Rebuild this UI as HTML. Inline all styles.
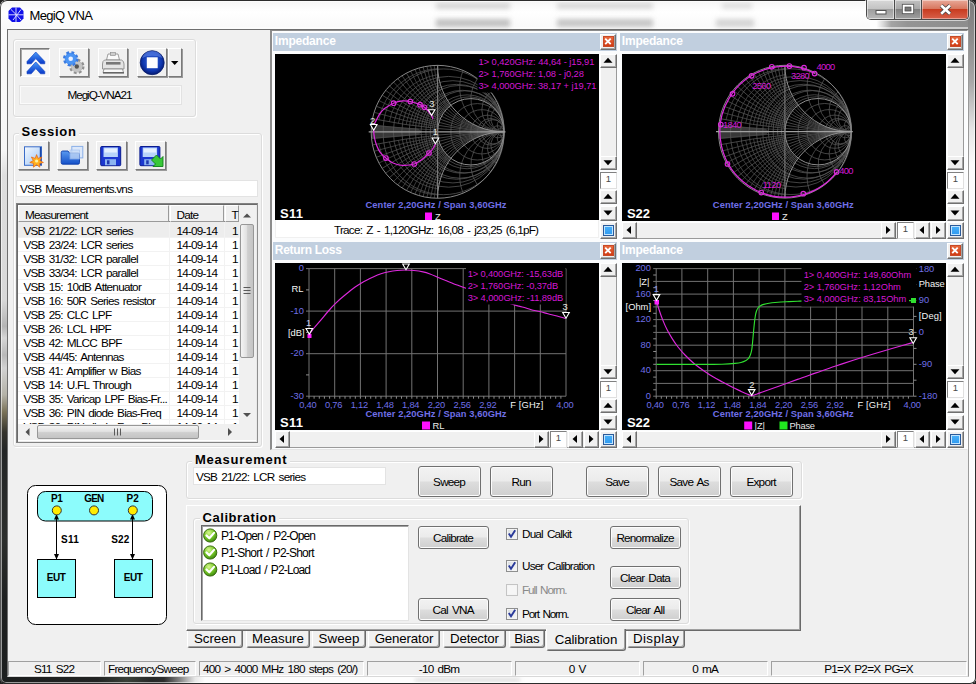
<!DOCTYPE html><html><head><meta charset="utf-8"><title>MegiQ VNA</title><style>
html,body{margin:0;padding:0}
body{width:976px;height:684px;overflow:hidden;position:relative;background:#202020;font-family:"Liberation Sans",sans-serif;color:#000}
.a{position:absolute;box-sizing:border-box}
.t{position:absolute;white-space:pre}
.btn3{position:absolute;box-sizing:border-box;background:#f0f0f0;border:1px solid;border-color:#fff #7a7a7a #7a7a7a #fff;box-shadow:1px 1px 0 #9a9a9a}
.sb{position:absolute;box-sizing:border-box;background:#f0f0f0;border:1px solid;border-color:#fff #707070 #707070 #fff;box-shadow:inset -1px -1px 0 #a6a6a6}
.w7{position:absolute;box-sizing:border-box;border:1px solid #707070;border-radius:3px;background:linear-gradient(#f2f2f2 0%,#ebebeb 48%,#dddddd 52%,#cfcfcf 100%);box-shadow:inset 0 0 0 1px #fcfcfc}
.gb{position:absolute;box-sizing:border-box;border:1px solid #dcdcdc;border-radius:3px;box-shadow:inset 1px 1px 0 #fff,1px 1px 0 #fff}
svg{position:absolute;left:0;top:0;overflow:visible}
</style></head><body>
<div class="a" style="left:0;top:0;width:976px;height:684px;border-radius:7px 7px 6px 6px;background:#fff;overflow:hidden">
<div class="a" style="left:0;top:0;width:976px;height:30px;background:linear-gradient(90deg,#fafafa 0%,#ffffff 30%,#fefefe 89.800%,#d8d8d8 90.500%,#a4a4a4 91.300%,#949494 93%,#8c8c8c 100%)"></div>
<div class="a" style="left:0;top:0;width:870px;height:30px;background:linear-gradient(#f4f4f4,#ffffff 40%,#f8f8f8)"></div>
<div class="a" style="left:8px;top:27px;width:961px;height:2px;background:rgba(255,255,255,.55)"></div>
<div class="a" style="left:436px;top:3px;width:74px;height:6px;background:rgba(60,60,60,0.2);filter:blur(2.5px)"></div>
<div class="a" style="left:436px;top:19px;width:74px;height:8px;background:rgba(60,60,60,0.3);filter:blur(2.5px)"></div>
<div class="a" style="left:557px;top:3px;width:96px;height:6px;background:rgba(60,60,60,0.18);filter:blur(2.5px)"></div>
<div class="a" style="left:557px;top:19px;width:96px;height:8px;background:rgba(60,60,60,0.28);filter:blur(2.5px)"></div>
<div class="a" style="left:722px;top:3px;width:30px;height:6px;background:rgba(60,60,60,0.14);filter:blur(2.5px)"></div>
<div class="a" style="left:716px;top:19px;width:38px;height:8px;background:rgba(60,60,60,0.2);filter:blur(2.5px)"></div>
<div class="a" style="left:0;top:30px;width:8px;height:654px;background:linear-gradient(#fbfbfb 0.0%,#f6f6f6 18.3%,#dedede 22.2%,#d8d8d8 41.3%,#b4b4b4 45.3%,#d6d6d6 47.1%,#b8b8b8 49.7%,#d2d2d2 51.7%,#b4b2a8 55.8%,#7a7258 58.4%,#34332c 61.5%,#242626 64.2%,#2c2e2c 78.0%,#1e2020 87.2%,#1c1e1e 100.0%)"></div>
<div class="a" style="left:968px;top:0;width:8px;height:684px;background:linear-gradient(#7c7c7c 0%,#8e8e8e 6%,#a8a8a8 12%,#e6e6e6 19%,#fbfbfb 24%,#fdfdfd 100%)"></div>
<div class="a" style="left:0;top:676px;width:976px;height:8px;background:linear-gradient(90deg,#1c1e1e 0%,#222424 10%,#3a4038 13%,#262828 15.500%,#2c2c2c 16.800%,#8a8a8a 18.500%,#e8e8e8 20%,#fdfdfd 21%,#fdfdfd 100%)"></div>
<div class="a" style="left:415px;top:678px;width:105px;height:4px;background:rgba(60,60,60,.16);filter:blur(2px)"></div>
</div>
<div class="a" style="left:0;top:0;width:976px;height:684px;border:1px solid #2b2b2b;border-radius:7px 7px 6px 6px;border-left-color:#555;box-shadow:inset 0 0 0 1px rgba(255,255,255,.55)"></div>
<div class="a" style="left:7px;top:29px;width:962px;height:648px;border:1px solid #6e6e6e;border-right-color:#9a9a9a;border-bottom-color:#d8d8d8;background:#f0f0f0"></div>
<svg width="976" height="30"><g><polygon points="12,7.5 20,7.5 23.5,11 23.5,18.5 20,22 12,22 8.5,18.5 8.5,11" fill="#1010e8"/><path d="M8.5 14.8H23.5M16 7.5V22M11 9.5Q16 14 21 20M13 20Q17 15 21 9.5" stroke="#e8e8ff" stroke-width="0.9" fill="none"/></g></svg>
<div class="t" style="left:29.50px;top:8px;font-size:13px;line-height:15px;letter-spacing:-0.64px;">MegiQ VNA</div>
<div class="a" style="left:866px;top:0;width:103px;height:20px;border:1px solid #4a4a4a;border-top:none;border-radius:0 0 5px 5px;overflow:hidden;box-shadow:0 0 0 1px rgba(255,255,255,.6)"><div class="a" style="left:0;top:0;width:28px;height:19px;background:linear-gradient(#d8d8d8 0%,#c4c4c4 45%,#9e9e9e 50%,#b8b8b8 100%);border-right:1px solid #4a4a4a;box-shadow:inset 0 0 0 1px rgba(255,255,255,.5)"></div><div class="a" style="left:28px;top:0;width:27px;height:19px;background:linear-gradient(#c0c0c0 0%,#a8a8a8 45%,#808080 50%,#a0a0a0 100%);border-right:1px solid #4a4a4a;box-shadow:inset 0 0 0 1px rgba(255,255,255,.45)"></div><div class="a" style="left:55px;top:0;width:46px;height:19px;background:linear-gradient(#e8a898 0%,#d87860 45%,#c83c20 50%,#d8604a 100%);box-shadow:inset 0 0 0 1px rgba(255,255,255,.4)"></div></div>
<svg width="976" height="30"><rect x="876" y="10.5" width="10" height="3.5" fill="#fff" stroke="#555" stroke-width="1"/><rect x="903.5" y="5.5" width="9" height="7" fill="none" stroke="#fff" stroke-width="2.2"/><rect x="902.3" y="4.3" width="11.4" height="9.4" fill="none" stroke="#555" stroke-width="0.8"/><rect x="905.2" y="7.2" width="5.6" height="3.6" fill="#777" stroke="#555" stroke-width="0.8"/><path d="M941.2 5.5L950 13.8M950 5.5L941.2 13.8" stroke="#444" stroke-width="4.2"/><path d="M941.2 5.5L950 13.8M950 5.5L941.2 13.8" stroke="#fff" stroke-width="2.6"/></svg>
<div class="gb" style="left:13px;top:39px;width:183px;height:78px"></div>
<div class="a" style="left:20px;top:48px;width:30px;height:29px;background:#f8f8f8;border:1px solid;border-color:#7a7a7a #fff #fff #7a7a7a;box-shadow:inset 1px 1px 0 #a8a8a8"></div>
<div class="btn3" style="left:59px;top:48px;width:30px;height:29px"></div>
<div class="btn3" style="left:98px;top:48px;width:30px;height:29px"></div>
<div class="btn3" style="left:137px;top:48px;width:30px;height:29px"></div>
<div class="btn3" style="left:168px;top:48px;width:14px;height:29px"></div>
<svg width="976" height="120">
<defs><linearGradient id="bl" x1="0" y1="0" x2="0" y2="1"><stop offset="0" stop-color="#4a9af8"/><stop offset="1" stop-color="#0838c8"/></linearGradient>
<radialGradient id="stp" cx=".5" cy=".45" r=".55"><stop offset="0" stop-color="#3a6ae0"/><stop offset=".7" stop-color="#1038b0"/><stop offset="1" stop-color="#061a70"/></radialGradient>
<linearGradient id="pg" x1="0" y1="0" x2="1" y2="1"><stop offset="0" stop-color="#f4f9ff"/><stop offset="1" stop-color="#9cc4f4"/></linearGradient>
<linearGradient id="fo" x1="0" y1="0" x2="0" y2="1"><stop offset="0" stop-color="#5a9af0"/><stop offset="1" stop-color="#1450c8"/></linearGradient></defs>
<path d="M27 61.5L35.8 52L44.8 61.5L44.8 63.8L40.5 63.8L35.8 58.6L31.2 63.8L27 63.8Z" fill="url(#bl)" stroke="#0a3cc0" stroke-width=".6"/>
<path d="M27 71.5L35.8 62L44.8 71.5L44.8 73.8L40.5 73.8L35.8 68.6L31.2 73.8L27 73.8Z" fill="url(#bl)" stroke="#0a3cc0" stroke-width=".6"/>
<g><circle cx="76.8" cy="66.5" r="6" fill="#b8b8b8" stroke="#909090" stroke-width="3.4" stroke-dasharray="2.6 2.1"/><circle cx="76.8" cy="66.5" r="5.6" fill="#c4c4c4"/><circle cx="76.8" cy="66.5" r="2.2" fill="#555"/>
<circle cx="70.7" cy="58.8" r="6" fill="#4a90f0" stroke="#3a7ae0" stroke-width="3.4" stroke-dasharray="2.6 2.1"/><circle cx="70.7" cy="58.8" r="5.6" fill="#4a94f4"/><circle cx="70.7" cy="58.8" r="2.3" fill="#e8f0ff"/></g>
<g><path d="M108 54H118L119.5 60H106.5Z" fill="#fafafa" stroke="#888" stroke-width=".8"/><rect x="110.5" y="52.5" width="5" height="3" fill="#ccc" stroke="#888" stroke-width=".6"/>
<path d="M104.5 60H121.5Q124 61 124 64V69H102.5V64Q102.500 61 104.5 60Z" fill="#e4e4e4" stroke="#808080" stroke-width=".8"/><rect x="106" y="62" width="14.5" height="2.6" fill="#777"/>
<path d="M104 69H122.5L123.500 72.500H103Z" fill="#f8f8f8" stroke="#808080" stroke-width=".8"/><rect x="103" y="72" width="21" height="1.6" fill="#666"/></g>
<circle cx="152.2" cy="62.7" r="12" fill="url(#stp)" stroke="#081c6c" stroke-width=".8"/><path d="M142 58A11 11 0 0 1 162.400 58A16 10 0 0 0 142 58Z" fill="#6a90f0" opacity=".55"/><rect x="146.800" y="57.300" width="10.900" height="10.900" fill="#fff"/>
<path d="M171 61H178.400L174.700 65Z" fill="#000"/>
</svg>
<div class="a" style="left:20px;top:86px;width:161px;height:18px;border:1px solid #fafafa;box-shadow:0 0 0 1px #e2e2e2;background:#f0f0f0"></div>
<div class="t" style="left:67.47px;top:88px;font-size:11.75px;line-height:13px;letter-spacing:-1.07px;">MegiQ-VNA21</div>
<div class="gb" style="left:13px;top:133px;width:249px;height:314px"></div>
<div class="a" style="left:19px;top:124px;width:60px;height:14px;background:#f0f0f0"></div>
<div class="t" style="left:21.50px;top:124px;font-size:13px;line-height:15px;letter-spacing:0.77px;font-weight:bold;">Session</div>
<div class="btn3" style="left:18px;top:141px;width:31px;height:29px"></div>
<div class="btn3" style="left:57px;top:141px;width:31px;height:29px"></div>
<div class="btn3" style="left:96px;top:141px;width:31px;height:29px"></div>
<div class="btn3" style="left:135px;top:141px;width:31px;height:29px"></div>
<svg width="976" height="180">
<rect x="24.5" y="146.800" width="17" height="18.500" fill="url(#pg)" stroke="#3a6cc8" stroke-width="1"/><path d="M40.500 147V165" stroke="#1a48a8" stroke-width="1.400"/>
<path d="M36.600 154.600L38 158.400L41.800 157L39.900 160.600L43.400 162.500L39.600 163.400L39.800 167.200L36.600 164.800L33.400 167.200L33.600 163.400L29.800 162.500L33.300 160.600L31.400 157L35.200 158.400Z" fill="#ffb020" stroke="#e86010" stroke-width=".7"/><circle cx="36.600" cy="161" r="1.600" fill="#fff2a0"/>
<rect x="71.800" y="146.400" width="11" height="11.500" fill="#dce8fa" stroke="#8ab0e8" stroke-width="1"/>
<path d="M61.200 152.500Q61.200 151 62.700 151H68L69.500 153H78Q79.500 153 79.500 154.500V162.700Q79.500 164.200 78 164.200H62.700Q61.200 164.200 61.200 162.700Z" fill="url(#fo)" stroke="#0c3ca8" stroke-width=".9"/>
<rect x="70" y="150" width="9.500" height="9" fill="#c8dcf8" opacity=".75" stroke="#9cbcf0" stroke-width=".8"/>
<g id="flp"><rect x="100.700" y="146.500" width="20" height="19.200" rx="1" fill="#1c38d0" stroke="#0a1c90" stroke-width="1"/><rect x="103.500" y="147.500" width="14.400" height="9.500" fill="#b8d4fa"/><rect x="104.500" y="148.500" width="12.400" height="4" fill="#e4f0ff"/><rect x="105" y="159.200" width="11" height="6" fill="#8cb4f0"/><rect x="107" y="160.300" width="2.500" height="4" fill="#2038b0"/></g>
<g transform="translate(39.200 0)"><rect x="100.700" y="146.500" width="20" height="19.200" rx="1" fill="#1c38d0" stroke="#0a1c90" stroke-width="1"/><rect x="103.500" y="147.500" width="14.400" height="9.500" fill="#b8d4fa"/><rect x="104.500" y="148.500" width="12.400" height="4" fill="#e4f0ff"/><rect x="105" y="159.200" width="11" height="6" fill="#8cb4f0"/><rect x="107" y="160.300" width="2.500" height="4" fill="#2038b0"/></g>
<path d="M156.500 155L160.500 159L163 156.500L163 166.500L153 166.500L155.500 164L151.500 160Z" fill="#38c838" stroke="#108018" stroke-width=".9"/>
</svg>
<div class="a" style="left:16px;top:180px;width:242px;height:17px;background:#fff;border:1px solid #e3e3e3"></div>
<div class="t" style="left:20.00px;top:182px;font-size:11.75px;line-height:13px;letter-spacing:-0.77px;word-spacing:1.6px;">VSB Measurements.vns</div>
<div class="a" style="left:16px;top:203px;width:242px;height:240px;background:#fff;border:1px solid #828282;border-right-color:#8e8e8e;box-shadow:inset 1px 1px 0 #696969,inset -1px -1px 0 #e8e8e8"></div>
<div class="a" style="left:18px;top:205px;width:221px;height:17px;background:#f0f0f0;border-bottom:1px solid #8a8a8a"></div>
<div class="a" style="left:18px;top:205px;width:151px;height:17px;border:1px solid;border-color:#fff #9a9a9a #9a9a9a #fff;background:#f0f0f0"></div>
<div class="a" style="left:170px;top:205px;width:54px;height:17px;border:1px solid;border-color:#fff #9a9a9a #9a9a9a #fff;background:#f0f0f0"></div>
<div class="a" style="left:225px;top:205px;width:14px;height:17px;border:1px solid;border-color:#fff #9a9a9a #9a9a9a #fff;background:#f0f0f0"></div>
<div class="t" style="left:25.00px;top:208px;font-size:11.75px;line-height:13px;letter-spacing:-0.83px;">Measurement</div>
<div class="t" style="left:176.50px;top:208px;font-size:11.75px;line-height:13px;letter-spacing:-0.78px;">Date</div>
<div class="t" style="left:231.50px;top:208px;font-size:11.75px;line-height:13px;">T</div>
<div class="a" style="left:18px;top:222px;width:221px;height:202px;overflow:hidden;background:#fff">
<div class="a" style="left:0;top:0;width:221px;height:15px;background:#ededed"></div>
<div class="a" style="left:151px;top:0;width:1px;height:202px;background:#f2f2f2"></div><div class="a" style="left:206px;top:0;width:1px;height:202px;background:#f2f2f2"></div>
<div class="a" style="left:0;top:15px;width:221px;height:1px;background:#f2f2f2"></div>
<div class="a" style="left:0;top:29px;width:221px;height:1px;background:#f2f2f2"></div>
<div class="a" style="left:0;top:43px;width:221px;height:1px;background:#f2f2f2"></div>
<div class="a" style="left:0;top:57px;width:221px;height:1px;background:#f2f2f2"></div>
<div class="a" style="left:0;top:71px;width:221px;height:1px;background:#f2f2f2"></div>
<div class="a" style="left:0;top:85px;width:221px;height:1px;background:#f2f2f2"></div>
<div class="a" style="left:0;top:99px;width:221px;height:1px;background:#f2f2f2"></div>
<div class="a" style="left:0;top:113px;width:221px;height:1px;background:#f2f2f2"></div>
<div class="a" style="left:0;top:127px;width:221px;height:1px;background:#f2f2f2"></div>
<div class="a" style="left:0;top:141px;width:221px;height:1px;background:#f2f2f2"></div>
<div class="a" style="left:0;top:155px;width:221px;height:1px;background:#f2f2f2"></div>
<div class="a" style="left:0;top:169px;width:221px;height:1px;background:#f2f2f2"></div>
<div class="a" style="left:0;top:183px;width:221px;height:1px;background:#f2f2f2"></div>
<div class="a" style="left:0;top:197px;width:221px;height:1px;background:#f2f2f2"></div>
<div class="a" style="left:0;top:211px;width:221px;height:1px;background:#f2f2f2"></div>
</div>
<div class="a" style="left:18px;top:222px;width:221px;height:202px;overflow:hidden">
<div class="t" style="left:5.50px;top:1.5px;font-size:11.75px;line-height:13px;letter-spacing:-0.78px;word-spacing:1.6px;">VSB 21/22: LCR series</div>
<div class="t" style="left:158.50px;top:1.5px;font-size:11.75px;line-height:13px;letter-spacing:-0.79px;">14-09-14</div>
<div class="t" style="left:214.00px;top:1.5px;font-size:11.75px;line-height:13px;">1</div>
<div class="t" style="left:5.50px;top:15.5px;font-size:11.75px;line-height:13px;letter-spacing:-0.78px;word-spacing:1.6px;">VSB 23/24: LCR series</div>
<div class="t" style="left:158.50px;top:15.5px;font-size:11.75px;line-height:13px;letter-spacing:-0.79px;">14-09-14</div>
<div class="t" style="left:214.00px;top:15.5px;font-size:11.75px;line-height:13px;">1</div>
<div class="t" style="left:5.50px;top:29.5px;font-size:11.75px;line-height:13px;letter-spacing:-0.78px;word-spacing:1.6px;">VSB 31/32: LCR parallel</div>
<div class="t" style="left:158.50px;top:29.5px;font-size:11.75px;line-height:13px;letter-spacing:-0.79px;">14-09-14</div>
<div class="t" style="left:214.00px;top:29.5px;font-size:11.75px;line-height:13px;">1</div>
<div class="t" style="left:5.50px;top:43.5px;font-size:11.75px;line-height:13px;letter-spacing:-0.78px;word-spacing:1.6px;">VSB 33/34: LCR parallel</div>
<div class="t" style="left:158.50px;top:43.5px;font-size:11.75px;line-height:13px;letter-spacing:-0.79px;">14-09-14</div>
<div class="t" style="left:214.00px;top:43.5px;font-size:11.75px;line-height:13px;">1</div>
<div class="t" style="left:5.50px;top:57.5px;font-size:11.75px;line-height:13px;letter-spacing:-0.78px;word-spacing:1.6px;">VSB 15: 10dB Attenuator</div>
<div class="t" style="left:158.50px;top:57.5px;font-size:11.75px;line-height:13px;letter-spacing:-0.79px;">14-09-14</div>
<div class="t" style="left:214.00px;top:57.5px;font-size:11.75px;line-height:13px;">1</div>
<div class="t" style="left:5.50px;top:71.5px;font-size:11.75px;line-height:13px;letter-spacing:-0.78px;word-spacing:1.6px;">VSB 16: 50R Series resistor</div>
<div class="t" style="left:158.50px;top:71.5px;font-size:11.75px;line-height:13px;letter-spacing:-0.79px;">14-09-14</div>
<div class="t" style="left:214.00px;top:71.5px;font-size:11.75px;line-height:13px;">1</div>
<div class="t" style="left:5.50px;top:85.5px;font-size:11.75px;line-height:13px;letter-spacing:-0.78px;word-spacing:1.6px;">VSB 25: CLC LPF</div>
<div class="t" style="left:158.50px;top:85.5px;font-size:11.75px;line-height:13px;letter-spacing:-0.79px;">14-09-14</div>
<div class="t" style="left:214.00px;top:85.5px;font-size:11.75px;line-height:13px;">1</div>
<div class="t" style="left:5.50px;top:99.5px;font-size:11.75px;line-height:13px;letter-spacing:-0.78px;word-spacing:1.6px;">VSB 26: LCL HPF</div>
<div class="t" style="left:158.50px;top:99.5px;font-size:11.75px;line-height:13px;letter-spacing:-0.79px;">14-09-14</div>
<div class="t" style="left:214.00px;top:99.5px;font-size:11.75px;line-height:13px;">1</div>
<div class="t" style="left:5.50px;top:113.5px;font-size:11.75px;line-height:13px;letter-spacing:-0.78px;word-spacing:1.6px;">VSB 42: MLCC BPF</div>
<div class="t" style="left:158.50px;top:113.5px;font-size:11.75px;line-height:13px;letter-spacing:-0.79px;">14-09-14</div>
<div class="t" style="left:214.00px;top:113.5px;font-size:11.75px;line-height:13px;">1</div>
<div class="t" style="left:5.50px;top:127.5px;font-size:11.75px;line-height:13px;letter-spacing:-0.78px;word-spacing:1.6px;">VSB 44/45: Antennas</div>
<div class="t" style="left:158.50px;top:127.5px;font-size:11.75px;line-height:13px;letter-spacing:-0.79px;">14-09-14</div>
<div class="t" style="left:214.00px;top:127.5px;font-size:11.75px;line-height:13px;">1</div>
<div class="t" style="left:5.50px;top:141.5px;font-size:11.75px;line-height:13px;letter-spacing:-0.78px;word-spacing:1.6px;">VSB 41: Amplifier w Bias</div>
<div class="t" style="left:158.50px;top:141.5px;font-size:11.75px;line-height:13px;letter-spacing:-0.79px;">14-09-14</div>
<div class="t" style="left:214.00px;top:141.5px;font-size:11.75px;line-height:13px;">1</div>
<div class="t" style="left:5.50px;top:155.5px;font-size:11.75px;line-height:13px;letter-spacing:-0.78px;word-spacing:1.6px;">VSB 14: U.FL Through</div>
<div class="t" style="left:158.50px;top:155.5px;font-size:11.75px;line-height:13px;letter-spacing:-0.79px;">14-09-14</div>
<div class="t" style="left:214.00px;top:155.5px;font-size:11.75px;line-height:13px;">1</div>
<div class="t" style="left:5.50px;top:169.5px;font-size:11.75px;line-height:13px;letter-spacing:-0.78px;word-spacing:1.6px;">VSB 35: Varicap LPF Bias-Fr...</div>
<div class="t" style="left:158.50px;top:169.5px;font-size:11.75px;line-height:13px;letter-spacing:-0.79px;">14-09-14</div>
<div class="t" style="left:214.00px;top:169.5px;font-size:11.75px;line-height:13px;">1</div>
<div class="t" style="left:5.50px;top:183.5px;font-size:11.75px;line-height:13px;letter-spacing:-0.78px;word-spacing:1.6px;">VSB 36: PIN diode Bias-Freq</div>
<div class="t" style="left:158.50px;top:183.5px;font-size:11.75px;line-height:13px;letter-spacing:-0.79px;">14-09-14</div>
<div class="t" style="left:214.00px;top:183.5px;font-size:11.75px;line-height:13px;">1</div>
<div class="t" style="left:5.50px;top:197.5px;font-size:11.75px;line-height:13px;letter-spacing:-0.78px;word-spacing:1.6px;">VSB 36: PIN diode Freq-Bias</div>
<div class="t" style="left:158.50px;top:197.5px;font-size:11.75px;line-height:13px;letter-spacing:-0.79px;">14-09-14</div>
<div class="t" style="left:214.00px;top:197.5px;font-size:11.75px;line-height:13px;">1</div>
</div>
<div class="a" style="left:239px;top:205px;width:17px;height:219px;background:#f0f0f0"></div>
<div class="a" style="left:240px;top:224px;width:14px;height:134px;border:1px solid #979797;border-radius:2px;background:linear-gradient(90deg,#f4f4f4,#e2e2e2 45%,#cfcfcf 55%,#c4c4c4)"></div>
<svg width="976" height="460"><path d="M243 217.500L247 213.500L251 217.500Z" fill="#505050"/><path d="M243 413L247 417L251 413Z" fill="#505050"/><path d="M243.500 287.500H250.500M243.500 290.500H250.500M243.500 293.500H250.500" stroke="#5a5a5a" stroke-width="1"/><path d="M29.500 428L25.500 432L29.500 436Z" fill="#505050"/><path d="M228 428L232 432L228 436Z" fill="#505050"/><path d="M114.500 428.500V435.500M117.500 428.500V435.500M120.500 428.500V435.500" stroke="#5a5a5a" stroke-width="1"/></svg>
<div class="a" style="left:18px;top:424px;width:238px;height:16px;background:#f0f0f0"></div>
<div class="a" style="left:37px;top:425px;width:162px;height:14px;border:1px solid #979797;border-radius:2px;background:linear-gradient(#f4f4f4,#e2e2e2 45%,#cfcfcf 55%,#c4c4c4)"></div>
<svg width="976" height="460"><path d="M29.500 428L25.500 432L29.500 436Z" fill="#505050"/><path d="M228 428L232 432L228 436Z" fill="#505050"/><path d="M114.500 428.500V435.500M117.500 428.500V435.500M120.500 428.500V435.500" stroke="#5a5a5a" stroke-width="1"/></svg>
<svg width="976" height="684">
<rect x="27.500" y="485.500" width="139" height="139" rx="8" fill="#fff" stroke="#000" stroke-width="1"/>
<rect x="37.500" y="491.500" width="115" height="29.500" rx="8" fill="#8cfcfc" stroke="#000" stroke-width="1"/>
<rect x="37.500" y="559.500" width="38" height="38" fill="#8cfcfc" stroke="#000" stroke-width="1"/>
<rect x="114.500" y="559.500" width="38" height="38" fill="#8cfcfc" stroke="#000" stroke-width="1"/>
<path d="M56.500 515V559M132.500 515V559" stroke="#000" stroke-width="1"/>
<path d="M56.500 514L54 519.500H59ZM56.500 559.500L54 554H59ZM132.500 514L130 519.500H135ZM132.500 559.500L130 554H135Z" fill="#000"/>
<circle cx="56.800" cy="510.400" r="4.500" fill="#ffec00" stroke="#333" stroke-width="1"/><circle cx="94" cy="510.400" r="4.500" fill="#ffec00" stroke="#333" stroke-width="1"/><circle cx="132.800" cy="510.400" r="4.500" fill="#ffec00" stroke="#333" stroke-width="1"/>
</svg>
<div class="t" style="left:51.10px;top:492.5px;font-size:10px;line-height:11px;letter-spacing:-0.43px;font-weight:bold;">P1</div>
<div class="t" style="left:84.30px;top:492.5px;font-size:10px;line-height:11px;letter-spacing:-0.84px;font-weight:bold;">GEN</div>
<div class="t" style="left:126.60px;top:492.5px;font-size:10px;line-height:11px;letter-spacing:-0.03px;font-weight:bold;">P2</div>
<div class="t" style="left:61.00px;top:533.5px;font-size:10px;line-height:11px;letter-spacing:0.28px;font-weight:bold;">S11</div>
<div class="t" style="left:111.20px;top:533.5px;font-size:10px;line-height:11px;letter-spacing:0.2px;font-weight:bold;">S22</div>
<div class="t" style="left:46.70px;top:572px;font-size:10px;line-height:11px;letter-spacing:-0.4px;font-weight:bold;">EUT</div>
<div class="t" style="left:123.70px;top:572px;font-size:10px;line-height:11px;letter-spacing:-0.4px;font-weight:bold;">EUT</div>
<div class="gb" style="left:186px;top:461px;width:616px;height:38px"></div>
<div class="a" style="left:192px;top:453px;width:98px;height:13px;background:#f0f0f0"></div>
<div class="t" style="left:195.00px;top:452px;font-size:13px;line-height:15px;letter-spacing:0.77px;font-weight:bold;">Measurement</div>
<div class="a" style="left:193px;top:467px;width:193px;height:18px;background:#fff;border:1px solid #e3e3e3"></div>
<div class="t" style="left:196.00px;top:469.5px;font-size:11.75px;line-height:13px;letter-spacing:-0.78px;word-spacing:1.6px;">VSB 21/22: LCR series</div>
<div class="w7" style="left:418px;top:466px;width:63px;height:31px"></div>
<div class="t" style="left:433.09px;top:474.5px;font-size:11.75px;line-height:13px;letter-spacing:-0.78px;">Sweep</div>
<div class="w7" style="left:490px;top:466px;width:63px;height:31px"></div>
<div class="t" style="left:511.50px;top:474.5px;font-size:11.75px;line-height:13px;letter-spacing:-0.78px;">Run</div>
<div class="w7" style="left:586px;top:466px;width:63px;height:31px"></div>
<div class="t" style="left:605.27px;top:474.5px;font-size:11.75px;line-height:13px;letter-spacing:-0.78px;">Save</div>
<div class="w7" style="left:658px;top:466px;width:63px;height:31px"></div>
<div class="t" style="left:669.48px;top:474.5px;font-size:11.75px;line-height:13px;letter-spacing:-0.78px;word-spacing:1.6px;">Save As</div>
<div class="w7" style="left:730px;top:466px;width:63px;height:31px"></div>
<div class="t" style="left:746.47px;top:474.5px;font-size:11.75px;line-height:13px;letter-spacing:-0.78px;">Export</div>
<div class="a" style="left:186px;top:505px;width:615px;height:126px;border:1px solid;border-color:#fff #696969 #696969 #fff;box-shadow:inset -1px -1px 0 #a0a0a0"></div>
<div class="gb" style="left:193px;top:518px;width:496px;height:106px"></div>
<div class="a" style="left:200px;top:511px;width:79px;height:13px;background:#f0f0f0"></div>
<div class="t" style="left:202.50px;top:509.5px;font-size:13px;line-height:15px;letter-spacing:0.56px;font-weight:bold;">Calibration</div>
<div class="a" style="left:201px;top:525px;width:208px;height:96px;background:#fff;border:1px solid;border-color:#696969 #e3e3e3 #e3e3e3 #696969;box-shadow:inset 1px 1px 0 #a0a0a0"></div>
<div class="t" style="left:221.00px;top:529px;font-size:12px;line-height:14px;letter-spacing:-0.89px;word-spacing:1.6px;">P1-Open / P2-Open</div>
<div class="t" style="left:221.00px;top:546px;font-size:12px;line-height:14px;letter-spacing:-0.8px;word-spacing:1.6px;">P1-Short / P2-Short</div>
<div class="t" style="left:221.00px;top:563px;font-size:12px;line-height:14px;letter-spacing:-0.87px;word-spacing:1.6px;">P1-Load / P2-Load</div>
<svg width="976" height="684"><defs><radialGradient id="ok" cx=".4" cy=".3" r=".8"><stop offset="0" stop-color="#d8f890"/><stop offset=".5" stop-color="#78c828"/><stop offset="1" stop-color="#2c7808"/></radialGradient></defs><circle cx="210.200" cy="535.5" r="6.600" fill="url(#ok)" stroke="#3a6a10" stroke-width="1"/><path d="M206.500 535.5L209.300 538.3L214 532.9" stroke="#fff" stroke-width="2.200" fill="none" stroke-linecap="round" stroke-linejoin="round"/><circle cx="210.200" cy="552.5" r="6.600" fill="url(#ok)" stroke="#3a6a10" stroke-width="1"/><path d="M206.500 552.5L209.300 555.3L214 549.9" stroke="#fff" stroke-width="2.200" fill="none" stroke-linecap="round" stroke-linejoin="round"/><circle cx="210.200" cy="569.5" r="6.600" fill="url(#ok)" stroke="#3a6a10" stroke-width="1"/><path d="M206.500 569.5L209.300 572.3L214 566.9" stroke="#fff" stroke-width="2.200" fill="none" stroke-linecap="round" stroke-linejoin="round"/></svg>
<div class="w7" style="left:418px;top:526px;width:71px;height:23px"></div>
<div class="t" style="left:433.10px;top:530.5px;font-size:11.75px;line-height:13px;letter-spacing:-0.78px;">Calibrate</div>
<div class="w7" style="left:418px;top:598px;width:71px;height:23px"></div>
<div class="t" style="left:432.51px;top:602.5px;font-size:11.75px;line-height:13px;letter-spacing:-0.78px;word-spacing:1.6px;">Cal VNA</div>
<div class="w7" style="left:610px;top:526px;width:71px;height:23px"></div>
<div class="t" style="left:616.42px;top:530.5px;font-size:11.75px;line-height:13px;letter-spacing:-0.78px;">Renormalize</div>
<div class="w7" style="left:610px;top:566px;width:71px;height:23px"></div>
<div class="t" style="left:620.12px;top:570.5px;font-size:11.75px;line-height:13px;letter-spacing:-0.78px;word-spacing:1.6px;">Clear Data</div>
<div class="w7" style="left:610px;top:598px;width:71px;height:23px"></div>
<div class="t" style="left:625.94px;top:602.5px;font-size:11.75px;line-height:13px;letter-spacing:-0.78px;word-spacing:1.6px;">Clear All</div>
<div class="a" style="left:506px;top:528px;width:12px;height:12px;border:1px solid #8e8f8f;background:linear-gradient(135deg,#d8dce0,#f8f8f8);box-shadow:inset 0 0 0 1px #f4f4f4"></div>
<svg width="976" height="684"><path d="M508.800 533.5L511 536.8L515.200 530.2" stroke="#2a3a9a" stroke-width="1.900" fill="none"/></svg>
<div class="t" style="left:522.00px;top:527px;font-size:11.75px;line-height:13px;letter-spacing:-0.83px;word-spacing:1.6px;">Dual Calkit</div>
<div class="a" style="left:506px;top:560px;width:12px;height:12px;border:1px solid #8e8f8f;background:linear-gradient(135deg,#d8dce0,#f8f8f8);box-shadow:inset 0 0 0 1px #f4f4f4"></div>
<svg width="976" height="684"><path d="M508.800 565.5L511 568.8L515.200 562.2" stroke="#2a3a9a" stroke-width="1.900" fill="none"/></svg>
<div class="t" style="left:522.00px;top:559px;font-size:11.75px;line-height:13px;letter-spacing:-0.86px;word-spacing:1.6px;">User Calibration</div>
<div class="a" style="left:506px;top:584px;width:12px;height:12px;border:1px solid #c4c4c4;background:#f6f6f6;box-shadow:inset 0 0 0 1px #f4f4f4"></div>
<div class="t" style="left:522.00px;top:583px;font-size:11.75px;line-height:13px;letter-spacing:-1.14px;word-spacing:1.6px;color:#8a8a8a;">Full Norm.</div>
<div class="a" style="left:506px;top:607.5px;width:12px;height:12px;border:1px solid #8e8f8f;background:linear-gradient(135deg,#d8dce0,#f8f8f8);box-shadow:inset 0 0 0 1px #f4f4f4"></div>
<svg width="976" height="684"><path d="M508.800 613L511 616.3L515.200 609.7" stroke="#2a3a9a" stroke-width="1.900" fill="none"/></svg>
<div class="t" style="left:522.00px;top:606.5px;font-size:11.75px;line-height:13px;letter-spacing:-1.2px;word-spacing:1.6px;">Port Norm.</div>
<div class="a" style="left:187px;top:631px;width:56px;height:17px;background:#f0f0f0;border:1px solid;border-color:transparent #696969 #696969 #fff;border-top:none;border-radius:0 0 3px 3px;box-shadow:inset -1px -1px 0 #a0a0a0"></div>
<div class="t" style="left:194.00px;top:631px;font-size:13.3px;line-height:15px;letter-spacing:-0.03px;">Screen</div>
<div class="a" style="left:246px;top:631px;width:64px;height:17px;background:#f0f0f0;border:1px solid;border-color:transparent #696969 #696969 #fff;border-top:none;border-radius:0 0 3px 3px;box-shadow:inset -1px -1px 0 #a0a0a0"></div>
<div class="t" style="left:252.10px;top:631px;font-size:13.3px;line-height:15px;letter-spacing:0.01px;">Measure</div>
<div class="a" style="left:312px;top:631px;width:54px;height:17px;background:#f0f0f0;border:1px solid;border-color:transparent #696969 #696969 #fff;border-top:none;border-radius:0 0 3px 3px;box-shadow:inset -1px -1px 0 #a0a0a0"></div>
<div class="t" style="left:318.50px;top:631px;font-size:13.3px;line-height:15px;letter-spacing:0.08px;">Sweep</div>
<div class="a" style="left:368px;top:631px;width:72px;height:17px;background:#f0f0f0;border:1px solid;border-color:transparent #696969 #696969 #fff;border-top:none;border-radius:0 0 3px 3px;box-shadow:inset -1px -1px 0 #a0a0a0"></div>
<div class="t" style="left:374.66px;top:631px;font-size:13.3px;line-height:15px;letter-spacing:-0.15px;">Generator</div>
<div class="a" style="left:443px;top:631px;width:63px;height:17px;background:#f0f0f0;border:1px solid;border-color:transparent #696969 #696969 #fff;border-top:none;border-radius:0 0 3px 3px;box-shadow:inset -1px -1px 0 #a0a0a0"></div>
<div class="t" style="left:450.00px;top:631px;font-size:13.3px;line-height:15px;letter-spacing:-0.18px;">Detector</div>
<div class="a" style="left:509px;top:631px;width:36px;height:17px;background:#f0f0f0;border:1px solid;border-color:transparent #696969 #696969 #fff;border-top:none;border-radius:0 0 3px 3px;box-shadow:inset -1px -1px 0 #a0a0a0"></div>
<div class="t" style="left:514.30px;top:631px;font-size:13.3px;line-height:15px;letter-spacing:-0.16px;">Bias</div>
<div class="a" style="left:546px;top:629px;width:80px;height:22px;background:#f0f0f0;border:1px solid;border-color:transparent #696969 #696969 #fff;border-top:none;border-radius:0 0 3px 3px;box-shadow:inset -1px -1px 0 #a0a0a0"></div>
<div class="t" style="left:554.66px;top:632px;font-size:13.3px;line-height:15px;letter-spacing:-0.09px;">Calibration</div>
<div class="a" style="left:627px;top:631px;width:58px;height:17px;background:#f0f0f0;border:1px solid;border-color:transparent #696969 #696969 #fff;border-top:none;border-radius:0 0 3px 3px;box-shadow:inset -1px -1px 0 #a0a0a0"></div>
<div class="t" style="left:633.00px;top:631px;font-size:13.3px;line-height:15px;letter-spacing:0.4px;">Display</div>
<div class="a" style="left:8px;top:661px;width:93px;height:15px;border:1px solid;border-color:#a0a0a0 #fff #fff #a0a0a0"></div>
<div class="t" style="left:33.93px;top:661.5px;font-size:11.75px;line-height:13px;letter-spacing:-0.78px;word-spacing:1.6px;">S11 S22</div>
<div class="a" style="left:104px;top:661px;width:92px;height:15px;border:1px solid;border-color:#a0a0a0 #fff #fff #a0a0a0"></div>
<div class="t" style="left:108.00px;top:661.5px;font-size:11.75px;line-height:13px;letter-spacing:-0.78px;">FrequencySweep</div>
<div class="a" style="left:199px;top:661px;width:165px;height:15px;border:1px solid;border-color:#a0a0a0 #fff #fff #a0a0a0"></div>
<div class="t" style="left:203.00px;top:661.5px;font-size:11.75px;line-height:13px;letter-spacing:-0.78px;word-spacing:1.6px;">400 &gt; 4000 MHz 180 steps (20/)</div>
<div class="a" style="left:367px;top:661px;width:145px;height:15px;border:1px solid;border-color:#a0a0a0 #fff #fff #a0a0a0"></div>
<div class="t" style="left:418.83px;top:661.5px;font-size:11.75px;line-height:13px;letter-spacing:-0.78px;word-spacing:1.6px;">-10 dBm</div>
<div class="a" style="left:515px;top:661px;width:125px;height:15px;border:1px solid;border-color:#a0a0a0 #fff #fff #a0a0a0"></div>
<div class="t" style="left:568.66px;top:661.5px;font-size:11.75px;line-height:13px;letter-spacing:-0.78px;word-spacing:1.6px;">0 V</div>
<div class="a" style="left:643px;top:661px;width:125px;height:15px;border:1px solid;border-color:#a0a0a0 #fff #fff #a0a0a0"></div>
<div class="t" style="left:692.15px;top:661.5px;font-size:11.75px;line-height:13px;letter-spacing:-0.78px;word-spacing:1.6px;">0 mA</div>
<div class="a" style="left:771px;top:661px;width:196px;height:15px;border:1px solid;border-color:#a0a0a0 #fff #fff #a0a0a0"></div>
<div class="t" style="left:824.29px;top:661.5px;font-size:11.75px;line-height:13px;letter-spacing:-0.78px;word-spacing:1.6px;">P1=X P2=X PG=X</div>
<div class="a" style="left:270px;top:30px;width:698px;height:420px;background:#fbfcfd;border:1px solid;border-color:#8a8a8a #fff #e4e4e4 #8a8a8a;border-left:2px solid #8c8c8c"></div>
<div class="a" style="left:273px;top:33px;width:344px;height:18px;background:#c1cfdf"></div>
<div class="t" style="left:274.80px;top:34px;font-size:12px;line-height:14px;letter-spacing:-0.21px;font-weight:bold;color:#fff;">Impedance</div>
<div class="sb" style="left:600px;top:34px;width:16px;height:16px"></div>
<div class="a" style="left:602.5px;top:36px;width:11px;height:11px;background:linear-gradient(#e8683c,#d03c14);border:1px solid #c84a28"></div>
<svg width="976" height="684"><path d="M605.2 38.7l5.500 5.500m0 -5.500l-5.500 5.500" stroke="#fff" stroke-width="1.900"/></svg>
<div class="a" style="left:275px;top:54px;width:324px;height:166.500px;background:#000"></div>
<div class="a" style="left:600px;top:54px;width:17px;height:102px;background:#f0f0f0;border-left:1px solid #fff;border-right:1px solid #9a9a9a"></div>
<div class="sb" style="left:600px;top:54px;width:17px;height:14px"></div>
<svg width="976" height="684"><path d="M603.5 62.75L608 57.75L612.5 62.75Z" fill="#000"/></svg>
<div class="sb" style="left:600px;top:156px;width:17px;height:14px"></div>
<svg width="976" height="684"><path d="M603.5 160.25L608 165.25L612.5 160.25Z" fill="#000"/></svg>
<div class="a" style="left:600px;top:172px;width:17px;height:17px;background:#fff;border:1px solid;border-color:#808080 #e0e0e0 #e0e0e0 #808080"></div>
<div class="t" style="left:605.85px;top:172.5px;font-size:9.5px;line-height:11px;color:#4a4a4a;">1</div>
<div class="sb" style="left:600px;top:190px;width:17px;height:14px"></div>
<svg width="976" height="684"><path d="M603.5 198.75L608 193.75L612.5 198.75Z" fill="#000"/></svg>
<div class="sb" style="left:600px;top:206px;width:17px;height:14.5px"></div>
<svg width="976" height="684"><path d="M603.5 210.5L608 215.5L612.5 210.5Z" fill="#000"/></svg>
<div class="sb" style="left:600px;top:222px;width:17px;height:17px"></div>
<div class="a" style="left:603px;top:224.5px;width:11px;height:11px;border:1px solid #2a5a9a;background:linear-gradient(#4ab0f8,#2e9af0);box-shadow:inset 0 0 0 1px #bfe4ff"></div>
<div class="a" style="left:275px;top:220px;width:324px;height:18px;background:#fff;border:1px solid #f0f0f0;border-top:none"></div>
<div class="t" style="left:333.98px;top:223px;font-size:11.75px;line-height:13px;letter-spacing:-0.77px;word-spacing:1.6px;">Trace: Z - 1,120GHz: 16,08 - j23,25 (6,1pF)</div>
<div class="a" style="left:620px;top:33px;width:344px;height:18px;background:#c1cfdf"></div>
<div class="t" style="left:621.80px;top:34px;font-size:12px;line-height:14px;letter-spacing:-0.21px;font-weight:bold;color:#fff;">Impedance</div>
<div class="sb" style="left:947px;top:34px;width:16px;height:16px"></div>
<div class="a" style="left:949.5px;top:36px;width:11px;height:11px;background:linear-gradient(#e8683c,#d03c14);border:1px solid #c84a28"></div>
<svg width="976" height="684"><path d="M952.2 38.7l5.500 5.500m0 -5.500l-5.500 5.500" stroke="#fff" stroke-width="1.900"/></svg>
<div class="a" style="left:622px;top:54px;width:324px;height:166.500px;background:#000"></div>
<div class="a" style="left:947px;top:54px;width:17px;height:102px;background:#f0f0f0;border-left:1px solid #fff;border-right:1px solid #9a9a9a"></div>
<div class="sb" style="left:947px;top:54px;width:17px;height:14px"></div>
<svg width="976" height="684"><path d="M950.5 62.75L955 57.75L959.5 62.75Z" fill="#000"/></svg>
<div class="sb" style="left:947px;top:156px;width:17px;height:14px"></div>
<svg width="976" height="684"><path d="M950.5 160.25L955 165.25L959.5 160.25Z" fill="#000"/></svg>
<div class="a" style="left:947px;top:172px;width:17px;height:17px;background:#fff;border:1px solid;border-color:#808080 #e0e0e0 #e0e0e0 #808080"></div>
<div class="t" style="left:952.85px;top:172.5px;font-size:9.5px;line-height:11px;color:#4a4a4a;">1</div>
<div class="sb" style="left:947px;top:190px;width:17px;height:14px"></div>
<svg width="976" height="684"><path d="M950.5 198.75L955 193.75L959.5 198.75Z" fill="#000"/></svg>
<div class="sb" style="left:947px;top:206px;width:17px;height:14.5px"></div>
<svg width="976" height="684"><path d="M950.5 210.5L955 215.5L959.5 210.5Z" fill="#000"/></svg>
<div class="sb" style="left:947px;top:222px;width:17px;height:17px"></div>
<div class="a" style="left:950px;top:224.5px;width:11px;height:11px;border:1px solid #2a5a9a;background:linear-gradient(#4ab0f8,#2e9af0);box-shadow:inset 0 0 0 1px #bfe4ff"></div>
<div class="a" style="left:622px;top:222px;width:324px;height:17px;background:#f0f0f0;border-top:1px solid #fff;border-bottom:1px solid #9a9a9a"></div>
<div class="sb" style="left:622px;top:222px;width:15px;height:17px"></div>
<svg width="976" height="684"><path d="M631 226L626.5 230L631 234Z" fill="#000"/></svg>
<div class="sb" style="left:881px;top:222px;width:15px;height:17px"></div>
<svg width="976" height="684"><path d="M886 226L890.5 230L886 234Z" fill="#000"/></svg>
<div class="a" style="left:897px;top:222px;width:17px;height:17px;background:#fff;border:1px solid;border-color:#808080 #e0e0e0 #e0e0e0 #808080"></div>
<div class="t" style="left:902.85px;top:222.5px;font-size:9.5px;line-height:11px;color:#4a4a4a;">1</div>
<div class="sb" style="left:915px;top:222px;width:15px;height:17px"></div>
<svg width="976" height="684"><path d="M924 226L919.5 230L924 234Z" fill="#000"/></svg>
<div class="sb" style="left:931px;top:222px;width:15px;height:17px"></div>
<svg width="976" height="684"><path d="M936 226L940.5 230L936 234Z" fill="#000"/></svg>
<div class="a" style="left:273px;top:242px;width:344px;height:18px;background:#c1cfdf"></div>
<div class="t" style="left:274.80px;top:243px;font-size:12px;line-height:14px;letter-spacing:-0.3px;font-weight:bold;color:#fff;">Return Loss</div>
<div class="sb" style="left:600px;top:243px;width:16px;height:16px"></div>
<div class="a" style="left:602.5px;top:245px;width:11px;height:11px;background:linear-gradient(#e8683c,#d03c14);border:1px solid #c84a28"></div>
<svg width="976" height="684"><path d="M605.2 247.7l5.500 5.500m0 -5.500l-5.500 5.500" stroke="#fff" stroke-width="1.900"/></svg>
<div class="a" style="left:275px;top:263px;width:324px;height:166.500px;background:#000"></div>
<div class="a" style="left:600px;top:263px;width:17px;height:102px;background:#f0f0f0;border-left:1px solid #fff;border-right:1px solid #9a9a9a"></div>
<div class="sb" style="left:600px;top:263px;width:17px;height:14px"></div>
<svg width="976" height="684"><path d="M603.5 271.75L608 266.75L612.5 271.75Z" fill="#000"/></svg>
<div class="sb" style="left:600px;top:365px;width:17px;height:14px"></div>
<svg width="976" height="684"><path d="M603.5 369.25L608 374.25L612.5 369.25Z" fill="#000"/></svg>
<div class="a" style="left:600px;top:381px;width:17px;height:17px;background:#fff;border:1px solid;border-color:#808080 #e0e0e0 #e0e0e0 #808080"></div>
<div class="t" style="left:605.85px;top:381.5px;font-size:9.5px;line-height:11px;color:#4a4a4a;">1</div>
<div class="sb" style="left:600px;top:399px;width:17px;height:14px"></div>
<svg width="976" height="684"><path d="M603.5 407.75L608 402.75L612.5 407.75Z" fill="#000"/></svg>
<div class="sb" style="left:600px;top:415px;width:17px;height:14.5px"></div>
<svg width="976" height="684"><path d="M603.5 419.5L608 424.5L612.5 419.5Z" fill="#000"/></svg>
<div class="sb" style="left:600px;top:431px;width:17px;height:17px"></div>
<div class="a" style="left:603px;top:433.5px;width:11px;height:11px;border:1px solid #2a5a9a;background:linear-gradient(#4ab0f8,#2e9af0);box-shadow:inset 0 0 0 1px #bfe4ff"></div>
<div class="a" style="left:275px;top:431px;width:324px;height:17px;background:#f0f0f0;border-top:1px solid #fff;border-bottom:1px solid #9a9a9a"></div>
<div class="sb" style="left:275px;top:431px;width:15px;height:17px"></div>
<svg width="976" height="684"><path d="M284 435L279.5 439L284 443Z" fill="#000"/></svg>
<div class="sb" style="left:534px;top:431px;width:15px;height:17px"></div>
<svg width="976" height="684"><path d="M539 435L543.5 439L539 443Z" fill="#000"/></svg>
<div class="a" style="left:550px;top:431px;width:17px;height:17px;background:#fff;border:1px solid;border-color:#808080 #e0e0e0 #e0e0e0 #808080"></div>
<div class="t" style="left:555.85px;top:431.5px;font-size:9.5px;line-height:11px;color:#4a4a4a;">1</div>
<div class="sb" style="left:568px;top:431px;width:15px;height:17px"></div>
<svg width="976" height="684"><path d="M577 435L572.5 439L577 443Z" fill="#000"/></svg>
<div class="sb" style="left:584px;top:431px;width:15px;height:17px"></div>
<svg width="976" height="684"><path d="M589 435L593.5 439L589 443Z" fill="#000"/></svg>
<div class="a" style="left:620px;top:242px;width:344px;height:18px;background:#c1cfdf"></div>
<div class="t" style="left:621.80px;top:243px;font-size:12px;line-height:14px;letter-spacing:-0.21px;font-weight:bold;color:#fff;">Impedance</div>
<div class="sb" style="left:947px;top:243px;width:16px;height:16px"></div>
<div class="a" style="left:949.5px;top:245px;width:11px;height:11px;background:linear-gradient(#e8683c,#d03c14);border:1px solid #c84a28"></div>
<svg width="976" height="684"><path d="M952.2 247.7l5.500 5.500m0 -5.500l-5.500 5.500" stroke="#fff" stroke-width="1.900"/></svg>
<div class="a" style="left:622px;top:263px;width:324px;height:166.500px;background:#000"></div>
<div class="a" style="left:947px;top:263px;width:17px;height:102px;background:#f0f0f0;border-left:1px solid #fff;border-right:1px solid #9a9a9a"></div>
<div class="sb" style="left:947px;top:263px;width:17px;height:14px"></div>
<svg width="976" height="684"><path d="M950.5 271.75L955 266.75L959.5 271.75Z" fill="#000"/></svg>
<div class="sb" style="left:947px;top:365px;width:17px;height:14px"></div>
<svg width="976" height="684"><path d="M950.5 369.25L955 374.25L959.5 369.25Z" fill="#000"/></svg>
<div class="a" style="left:947px;top:381px;width:17px;height:17px;background:#fff;border:1px solid;border-color:#808080 #e0e0e0 #e0e0e0 #808080"></div>
<div class="t" style="left:952.85px;top:381.5px;font-size:9.5px;line-height:11px;color:#4a4a4a;">1</div>
<div class="sb" style="left:947px;top:399px;width:17px;height:14px"></div>
<svg width="976" height="684"><path d="M950.5 407.75L955 402.75L959.5 407.75Z" fill="#000"/></svg>
<div class="sb" style="left:947px;top:415px;width:17px;height:14.5px"></div>
<svg width="976" height="684"><path d="M950.5 419.5L955 424.5L959.5 419.5Z" fill="#000"/></svg>
<div class="sb" style="left:947px;top:431px;width:17px;height:17px"></div>
<div class="a" style="left:950px;top:433.5px;width:11px;height:11px;border:1px solid #2a5a9a;background:linear-gradient(#4ab0f8,#2e9af0);box-shadow:inset 0 0 0 1px #bfe4ff"></div>
<div class="a" style="left:622px;top:431px;width:324px;height:17px;background:#f0f0f0;border-top:1px solid #fff;border-bottom:1px solid #9a9a9a"></div>
<div class="sb" style="left:622px;top:431px;width:15px;height:17px"></div>
<svg width="976" height="684"><path d="M631 435L626.5 439L631 443Z" fill="#000"/></svg>
<div class="sb" style="left:881px;top:431px;width:15px;height:17px"></div>
<svg width="976" height="684"><path d="M886 435L890.5 439L886 443Z" fill="#000"/></svg>
<div class="a" style="left:897px;top:431px;width:17px;height:17px;background:#fff;border:1px solid;border-color:#808080 #e0e0e0 #e0e0e0 #808080"></div>
<div class="t" style="left:902.85px;top:431.5px;font-size:9.5px;line-height:11px;color:#4a4a4a;">1</div>
<div class="sb" style="left:915px;top:431px;width:15px;height:17px"></div>
<svg width="976" height="684"><path d="M924 435L919.5 439L924 443Z" fill="#000"/></svg>
<div class="sb" style="left:931px;top:431px;width:15px;height:17px"></div>
<svg width="976" height="684"><path d="M936 435L940.5 439L936 443Z" fill="#000"/></svg>
<svg width="976" height="684"><path d="M371.6 124.5A1207.3 1207.3 0 0 0 418.4 128.8L422.0 131.8L418.4 134.8A1207.3 1207.3 0 0 1 371.6 139.1Z" fill="#383838" stroke="none"/><path d="M378.7 119.9A63.2 63.2 0 0 1 437.7 68.6 M371.5 125.2A1328.0 1328.0 0 0 0 437.6 130.1 M378.7 143.7A63.2 63.2 0 0 0 437.7 195.0 M371.5 138.4A1328.0 1328.0 0 0 1 437.6 133.5 M389.4 121.8A57.7 57.7 0 0 1 438.2 74.6 M374.1 112.3A442.7 442.7 0 0 0 438.0 126.8 M389.4 141.8A57.7 57.7 0 0 0 438.2 189.0 M374.1 151.3A442.7 442.7 0 0 1 438.0 136.8 M398.4 123.4A53.1 53.1 0 0 1 439.2 80.0 M379.0 100.6A265.6 265.6 0 0 0 438.6 123.6 M398.4 140.2A53.1 53.1 0 0 0 439.2 183.6 M379.0 163.0A265.6 265.6 0 0 1 438.6 140.0 M406.2 124.6A49.2 49.2 0 0 1 440.5 84.7 M385.7 90.4A189.7 189.7 0 0 0 439.6 120.5 M406.2 139.0A49.2 49.2 0 0 0 440.5 178.9 M385.7 173.2A189.7 189.7 0 0 1 439.6 143.1 M412.8 125.5A45.8 45.8 0 0 1 441.9 89.0 M393.6 82.1A147.6 147.6 0 0 0 440.8 117.6 M412.8 138.1A45.8 45.8 0 0 0 441.9 174.6 M393.6 181.5A147.6 147.6 0 0 1 440.8 146.0 M418.7 126.3A42.8 42.8 0 0 1 443.5 92.8 M402.0 75.7A120.7 120.7 0 0 0 442.3 114.8 M418.7 137.3A42.8 42.8 0 0 0 443.5 170.8 M402.0 187.9A120.7 120.7 0 0 1 442.3 148.8 M423.8 126.9A40.2 40.2 0 0 1 445.1 96.1 M410.6 71.1A102.2 102.2 0 0 0 443.9 112.3 M423.8 136.7A40.2 40.2 0 0 0 445.1 167.5 M410.6 192.5A102.2 102.2 0 0 1 443.9 151.3 M428.4 127.5A37.9 37.9 0 0 1 446.8 99.1 M419.0 68.1A88.5 88.5 0 0 0 445.8 110.0 M428.4 136.1A37.9 37.9 0 0 0 446.8 164.5 M419.0 195.5A88.5 88.5 0 0 1 445.8 153.6 M432.4 127.9A35.9 35.9 0 0 1 448.4 101.8 M426.9 66.3A78.1 78.1 0 0 0 447.8 107.9 M432.4 135.7A35.9 35.9 0 0 0 448.4 161.8 M426.9 197.3A78.1 78.1 0 0 1 447.8 155.7 M436.1 128.3A34.1 34.1 0 0 1 450.1 104.1 M434.2 65.5A69.9 69.9 0 0 0 449.8 106.1 M436.1 135.3A34.1 34.1 0 0 0 450.1 159.5 M434.2 198.1A69.9 69.9 0 0 1 449.8 157.5" stroke="#4a4a4a" stroke-width=".8" fill="none"/><path d="M383.3 131.8A60.4 60.4 0 1 1 504.0 131.8A60.4 60.4 0 1 1 383.3 131.8 M372.5 118.7A664.0 664.0 0 0 0 504.0 131.8 M372.5 144.9A664.0 664.0 0 0 1 504.0 131.8 M393.3 131.8A55.3 55.3 0 1 1 504.0 131.8A55.3 55.3 0 1 1 393.3 131.8 M376.3 106.3A332.0 332.0 0 0 0 504.0 131.8 M376.3 157.3A332.0 332.0 0 0 1 504.0 131.8 M401.8 131.8A51.1 51.1 0 1 1 504.0 131.8A51.1 51.1 0 1 1 401.8 131.8 M382.2 95.2A221.3 221.3 0 0 0 504.0 131.8 M382.2 168.4A221.3 221.3 0 0 1 504.0 131.8 M409.1 131.8A47.4 47.4 0 1 1 504.0 131.8A47.4 47.4 0 1 1 409.1 131.8 M389.5 86.0A166.0 166.0 0 0 0 504.0 131.8 M389.5 177.6A166.0 166.0 0 0 1 504.0 131.8 M415.5 131.8A44.3 44.3 0 1 1 504.0 131.8A44.3 44.3 0 1 1 415.5 131.8 M397.8 78.7A132.8 132.8 0 0 0 504.0 131.8 M397.8 184.9A132.8 132.8 0 0 1 504.0 131.8 M421.0 131.8A41.5 41.5 0 1 1 504.0 131.8A41.5 41.5 0 1 1 421.0 131.8 M406.4 73.2A110.7 110.7 0 0 0 504.0 131.8 M406.4 190.4A110.7 110.7 0 0 1 504.0 131.8 M425.9 131.8A39.1 39.1 0 1 1 504.0 131.8A39.1 39.1 0 1 1 425.9 131.8 M414.9 69.4A94.9 94.9 0 0 0 504.0 131.8 M414.9 194.2A94.9 94.9 0 0 1 504.0 131.8 M430.2 131.8A36.9 36.9 0 1 1 504.0 131.8A36.9 36.9 0 1 1 430.2 131.8 M423.0 67.0A83.0 83.0 0 0 0 504.0 131.8 M423.0 196.6A83.0 83.0 0 0 1 504.0 131.8 M434.1 131.8A34.9 34.9 0 1 1 504.0 131.8A34.9 34.9 0 1 1 434.1 131.8 M430.6 65.8A73.8 73.8 0 0 0 504.0 131.8 M430.6 197.8A73.8 73.8 0 0 1 504.0 131.8 M450.9 131.8A26.6 26.6 0 1 1 504.0 131.8A26.6 26.6 0 1 1 450.9 131.8 M463.1 70.5A44.3 44.3 0 0 0 504.0 131.8 M463.1 193.1A44.3 44.3 0 0 1 504.0 131.8 M459.7 131.8A22.1 22.1 0 1 1 504.0 131.8A22.1 22.1 0 1 1 459.7 131.8 M477.4 78.7A33.2 33.2 0 0 0 504.0 131.8 M477.4 184.9A33.2 33.2 0 0 1 504.0 131.8 M470.8 131.8A16.6 16.6 0 1 1 504.0 131.8A16.6 16.6 0 1 1 470.8 131.8 M490.7 92.0A22.1 22.1 0 0 0 504.0 131.8 M490.7 171.6A22.1 22.1 0 0 1 504.0 131.8 M477.4 131.8A13.3 13.3 0 1 1 504.0 131.8A13.3 13.3 0 1 1 477.4 131.8 M496.2 100.6A16.6 16.6 0 0 0 504.0 131.8 M496.2 163.0A16.6 16.6 0 0 1 504.0 131.8 M481.9 131.8A11.1 11.1 0 1 1 504.0 131.8A11.1 11.1 0 1 1 481.9 131.8 M498.9 106.3A13.3 13.3 0 0 0 504.0 131.8 M498.9 157.3A13.3 13.3 0 0 1 504.0 131.8 M491.9 131.8A6.0 6.0 0 1 1 504.0 131.8A6.0 6.0 0 1 1 491.9 131.8 M502.7 118.7A6.6 6.6 0 0 0 504.0 131.8 M502.7 144.9A6.6 6.6 0 0 1 504.0 131.8 M497.7 131.8A3.2 3.2 0 1 1 504.0 131.8A3.2 3.2 0 1 1 497.7 131.8 M503.7 125.2A3.3 3.3 0 0 0 504.0 131.8 M503.7 138.4A3.3 3.3 0 0 1 504.0 131.8 M501.4 131.8A1.3 1.3 0 1 1 504.0 131.8A1.3 1.3 0 1 1 501.4 131.8 M503.9 129.1A1.3 1.3 0 0 0 504.0 131.8 M503.9 134.5A1.3 1.3 0 0 1 504.0 131.8" stroke="#545454" stroke-width=".8" fill="none"/><path d="M437.6 131.8A33.2 33.2 0 1 1 504.0 131.8A33.2 33.2 0 1 1 437.6 131.8 M437.6 65.4A66.4 66.4 0 0 0 504.0 131.8 M437.6 198.2A66.4 66.4 0 0 1 504.0 131.8" stroke="#8e8e8e" stroke-width="1" fill="none"/><path d="M371.2 131.8A66.4 66.4 0 1 1 504.0 131.8A66.4 66.4 0 1 1 371.2 131.8" stroke="#868686" stroke-width="1" fill="none"/><path d="M368.7 131.8H505.5" stroke="#a0a0a0" stroke-width="1.200"/><path d="M437.6 65.4V198.2" stroke="#808080" stroke-width="1"/><path d="M435.4 144.0C435.0 144.8 434.1 147.0 433.0 148.5C431.9 150.0 430.8 151.2 429.0 153.0C427.2 154.8 424.5 157.7 422.0 159.5C419.5 161.3 417.4 163.0 414.2 164.0C411.0 165.0 406.1 165.6 402.6 165.4C399.1 165.2 395.8 164.2 393.0 163.0C390.2 161.8 388.1 159.9 385.9 158.1C383.7 156.3 381.5 154.0 380.0 152.0C378.5 150.0 377.8 148.3 376.9 146.0C376.0 143.7 375.0 140.6 374.5 138.0C374.0 135.4 373.7 132.8 373.7 130.5C373.7 128.2 374.0 125.9 374.5 124.0C375.0 122.1 376.0 120.8 376.9 119.0C377.8 117.2 378.7 115.2 380.0 113.5C381.3 111.8 382.3 110.3 384.6 108.6C386.9 106.9 390.6 104.5 393.6 103.2C396.6 101.9 399.8 101.2 402.6 100.9C405.4 100.6 407.4 100.9 410.3 101.5C413.2 102.1 417.6 103.7 420.0 104.7C422.4 105.7 423.2 106.3 424.5 107.3C425.8 108.3 426.5 109.1 427.7 110.5C428.9 111.9 430.7 114.3 431.6 115.7C432.5 117.1 432.7 118.4 432.9 118.9" stroke="#dc28dc" stroke-width="1.250" fill="none"/><circle cx="429" cy="153" r="2.300" stroke="#dc28dc" stroke-width="1.100" fill="none"/><circle cx="414.2" cy="164" r="2.300" stroke="#dc28dc" stroke-width="1.100" fill="none"/><circle cx="385.9" cy="158.1" r="2.300" stroke="#dc28dc" stroke-width="1.100" fill="none"/><circle cx="393.6" cy="103.2" r="2.300" stroke="#dc28dc" stroke-width="1.100" fill="none"/><circle cx="410.3" cy="101.5" r="2.300" stroke="#dc28dc" stroke-width="1.100" fill="none"/><circle cx="420" cy="104.7" r="2.300" stroke="#dc28dc" stroke-width="1.100" fill="none"/><circle cx="424.5" cy="107.3" r="2.300" stroke="#dc28dc" stroke-width="1.100" fill="none"/><rect x="477.500" y="55" width="120" height="37.500" fill="#000"/><path d="M432.1 138L438.7 138L435.4 143.7Z" fill="#000" stroke="#fff" stroke-width="1.100"/><path d="M370.4 124.5L377 124.5L373.7 130.2Z" fill="#000" stroke="#fff" stroke-width="1.100"/><path d="M428.3 109.7L434.9 109.7L431.6 115.4Z" fill="#000" stroke="#fff" stroke-width="1.100"/><rect x="425" y="212.500" width="7" height="7.500" fill="#ff10ff"/></svg>
<div class="t" style="left:432.70px;top:127px;font-size:9.33px;line-height:10px;color:#e8e8e0;">1</div>
<div class="t" style="left:370.10px;top:116px;font-size:9.33px;line-height:10px;color:#e8e8e0;">2</div>
<div class="t" style="left:429.20px;top:99.3px;font-size:9.33px;line-height:10px;color:#e8e8e0;">3</div>
<div class="t" style="left:478.50px;top:57px;font-size:9.33px;line-height:10px;letter-spacing:-0.06px;color:#d418d4;">1&gt; 0,420GHz: 44,64 - j15,91</div>
<div class="t" style="left:478.50px;top:69px;font-size:9.33px;line-height:10px;letter-spacing:-0.07px;color:#d418d4;">2&gt; 1,760GHz: 1,08 - j0,28</div>
<div class="t" style="left:478.50px;top:81px;font-size:9.33px;line-height:10px;letter-spacing:-0.07px;color:#d418d4;">3&gt; 4,000GHz: 38,17 + j19,71</div>
<div class="t" style="left:365.55px;top:199.5px;font-size:9.33px;line-height:10px;letter-spacing:0.07px;font-weight:bold;color:#6f6fe6;">Center 2,20GHz / Span 3,60GHz</div>
<div class="t" style="left:280.00px;top:206px;font-size:13px;line-height:15px;letter-spacing:0.29px;font-weight:bold;color:#fff;">S11</div>
<div class="t" style="left:435.00px;top:211.5px;font-size:9.33px;line-height:10px;color:#e8e8e8;">Z</div>
<svg width="976" height="684"><path d="M718.9 124.4A1207.3 1207.3 0 0 0 765.7 128.7L769.3 131.7L765.7 134.7A1207.3 1207.3 0 0 1 718.9 139.0Z" fill="#383838" stroke="none"/><path d="M726.0 119.8A63.2 63.2 0 0 1 785.0 68.5 M718.8 125.1A1328.0 1328.0 0 0 0 784.9 130.0 M726.0 143.6A63.2 63.2 0 0 0 785.0 194.9 M718.8 138.3A1328.0 1328.0 0 0 1 784.9 133.4 M736.7 121.7A57.7 57.7 0 0 1 785.5 74.5 M721.4 112.2A442.7 442.7 0 0 0 785.3 126.7 M736.7 141.7A57.7 57.7 0 0 0 785.5 188.9 M721.4 151.2A442.7 442.7 0 0 1 785.3 136.7 M745.7 123.3A53.1 53.1 0 0 1 786.5 79.9 M726.3 100.5A265.6 265.6 0 0 0 785.9 123.5 M745.7 140.1A53.1 53.1 0 0 0 786.5 183.5 M726.3 162.9A265.6 265.6 0 0 1 785.9 139.9 M753.5 124.5A49.2 49.2 0 0 1 787.8 84.6 M733.0 90.3A189.7 189.7 0 0 0 786.9 120.4 M753.5 138.9A49.2 49.2 0 0 0 787.8 178.8 M733.0 173.1A189.7 189.7 0 0 1 786.9 143.0 M760.1 125.4A45.8 45.8 0 0 1 789.2 88.9 M740.9 82.0A147.6 147.6 0 0 0 788.1 117.5 M760.1 138.0A45.8 45.8 0 0 0 789.2 174.5 M740.9 181.4A147.6 147.6 0 0 1 788.1 145.9 M766.0 126.2A42.8 42.8 0 0 1 790.8 92.7 M749.3 75.6A120.7 120.7 0 0 0 789.6 114.7 M766.0 137.2A42.8 42.8 0 0 0 790.8 170.7 M749.3 187.8A120.7 120.7 0 0 1 789.6 148.7 M771.1 126.8A40.2 40.2 0 0 1 792.4 96.0 M757.9 71.0A102.2 102.2 0 0 0 791.2 112.2 M771.1 136.6A40.2 40.2 0 0 0 792.4 167.4 M757.9 192.4A102.2 102.2 0 0 1 791.2 151.2 M775.7 127.4A37.9 37.9 0 0 1 794.1 99.0 M766.3 68.0A88.5 88.5 0 0 0 793.1 109.9 M775.7 136.0A37.9 37.9 0 0 0 794.1 164.4 M766.3 195.4A88.5 88.5 0 0 1 793.1 153.5 M779.7 127.8A35.9 35.9 0 0 1 795.7 101.7 M774.2 66.2A78.1 78.1 0 0 0 795.1 107.8 M779.7 135.6A35.9 35.9 0 0 0 795.7 161.7 M774.2 197.2A78.1 78.1 0 0 1 795.1 155.6 M783.4 128.2A34.1 34.1 0 0 1 797.4 104.0 M781.5 65.4A69.9 69.9 0 0 0 797.1 106.0 M783.4 135.2A34.1 34.1 0 0 0 797.4 159.4 M781.5 198.0A69.9 69.9 0 0 1 797.1 157.4" stroke="#4a4a4a" stroke-width=".8" fill="none"/><path d="M730.6 131.7A60.4 60.4 0 1 1 851.3 131.7A60.4 60.4 0 1 1 730.6 131.7 M719.8 118.6A664.0 664.0 0 0 0 851.3 131.7 M719.8 144.8A664.0 664.0 0 0 1 851.3 131.7 M740.6 131.7A55.3 55.3 0 1 1 851.3 131.7A55.3 55.3 0 1 1 740.6 131.7 M723.6 106.2A332.0 332.0 0 0 0 851.3 131.7 M723.6 157.2A332.0 332.0 0 0 1 851.3 131.7 M749.1 131.7A51.1 51.1 0 1 1 851.3 131.7A51.1 51.1 0 1 1 749.1 131.7 M729.5 95.1A221.3 221.3 0 0 0 851.3 131.7 M729.5 168.3A221.3 221.3 0 0 1 851.3 131.7 M756.4 131.7A47.4 47.4 0 1 1 851.3 131.7A47.4 47.4 0 1 1 756.4 131.7 M736.8 85.9A166.0 166.0 0 0 0 851.3 131.7 M736.8 177.5A166.0 166.0 0 0 1 851.3 131.7 M762.8 131.7A44.3 44.3 0 1 1 851.3 131.7A44.3 44.3 0 1 1 762.8 131.7 M745.1 78.6A132.8 132.8 0 0 0 851.3 131.7 M745.1 184.8A132.8 132.8 0 0 1 851.3 131.7 M768.3 131.7A41.5 41.5 0 1 1 851.3 131.7A41.5 41.5 0 1 1 768.3 131.7 M753.7 73.1A110.7 110.7 0 0 0 851.3 131.7 M753.7 190.3A110.7 110.7 0 0 1 851.3 131.7 M773.2 131.7A39.1 39.1 0 1 1 851.3 131.7A39.1 39.1 0 1 1 773.2 131.7 M762.2 69.3A94.9 94.9 0 0 0 851.3 131.7 M762.2 194.1A94.9 94.9 0 0 1 851.3 131.7 M777.5 131.7A36.9 36.9 0 1 1 851.3 131.7A36.9 36.9 0 1 1 777.5 131.7 M770.3 66.9A83.0 83.0 0 0 0 851.3 131.7 M770.3 196.5A83.0 83.0 0 0 1 851.3 131.7 M781.4 131.7A34.9 34.9 0 1 1 851.3 131.7A34.9 34.9 0 1 1 781.4 131.7 M777.9 65.7A73.8 73.8 0 0 0 851.3 131.7 M777.9 197.7A73.8 73.8 0 0 1 851.3 131.7 M798.2 131.7A26.6 26.6 0 1 1 851.3 131.7A26.6 26.6 0 1 1 798.2 131.7 M810.4 70.4A44.3 44.3 0 0 0 851.3 131.7 M810.4 193.0A44.3 44.3 0 0 1 851.3 131.7 M807.0 131.7A22.1 22.1 0 1 1 851.3 131.7A22.1 22.1 0 1 1 807.0 131.7 M824.7 78.6A33.2 33.2 0 0 0 851.3 131.7 M824.7 184.8A33.2 33.2 0 0 1 851.3 131.7 M818.1 131.7A16.6 16.6 0 1 1 851.3 131.7A16.6 16.6 0 1 1 818.1 131.7 M838.0 91.9A22.1 22.1 0 0 0 851.3 131.7 M838.0 171.5A22.1 22.1 0 0 1 851.3 131.7 M824.7 131.7A13.3 13.3 0 1 1 851.3 131.7A13.3 13.3 0 1 1 824.7 131.7 M843.5 100.5A16.6 16.6 0 0 0 851.3 131.7 M843.5 162.9A16.6 16.6 0 0 1 851.3 131.7 M829.2 131.7A11.1 11.1 0 1 1 851.3 131.7A11.1 11.1 0 1 1 829.2 131.7 M846.2 106.2A13.3 13.3 0 0 0 851.3 131.7 M846.2 157.2A13.3 13.3 0 0 1 851.3 131.7 M839.2 131.7A6.0 6.0 0 1 1 851.3 131.7A6.0 6.0 0 1 1 839.2 131.7 M850.0 118.6A6.6 6.6 0 0 0 851.3 131.7 M850.0 144.8A6.6 6.6 0 0 1 851.3 131.7 M845.0 131.7A3.2 3.2 0 1 1 851.3 131.7A3.2 3.2 0 1 1 845.0 131.7 M851.0 125.1A3.3 3.3 0 0 0 851.3 131.7 M851.0 138.3A3.3 3.3 0 0 1 851.3 131.7 M848.7 131.7A1.3 1.3 0 1 1 851.3 131.7A1.3 1.3 0 1 1 848.7 131.7 M851.2 129.0A1.3 1.3 0 0 0 851.3 131.7 M851.2 134.4A1.3 1.3 0 0 1 851.3 131.7" stroke="#545454" stroke-width=".8" fill="none"/><path d="M784.9 131.7A33.2 33.2 0 1 1 851.3 131.7A33.2 33.2 0 1 1 784.9 131.7 M784.9 65.3A66.4 66.4 0 0 0 851.3 131.7 M784.9 198.1A66.4 66.4 0 0 1 851.3 131.7" stroke="#8e8e8e" stroke-width="1" fill="none"/><path d="M718.5 131.7A66.4 66.4 0 1 1 851.3 131.7A66.4 66.4 0 1 1 718.5 131.7" stroke="#868686" stroke-width="1" fill="none"/><path d="M716 131.7H852.8" stroke="#a0a0a0" stroke-width="1.200"/><path d="M784.9 65.3V198.1" stroke="#808080" stroke-width="1"/><path d="M836.9 171.9A65.4 65.4 0 1 1 815.1 73.5" stroke="#dc28dc" stroke-width="1.250" fill="none"/><circle cx="836.6" cy="171.9" r="2.300" stroke="#dc28dc" stroke-width="1.100" fill="none"/><circle cx="803.3" cy="193.7" r="2.300" stroke="#dc28dc" stroke-width="1.100" fill="none"/><circle cx="761.3" cy="192.6" r="2.300" stroke="#dc28dc" stroke-width="1.100" fill="none"/><circle cx="727.5" cy="164" r="2.300" stroke="#dc28dc" stroke-width="1.100" fill="none"/><circle cx="720.8" cy="124.6" r="2.300" stroke="#dc28dc" stroke-width="1.100" fill="none"/><circle cx="732.5" cy="93.8" r="2.300" stroke="#dc28dc" stroke-width="1.100" fill="none"/><circle cx="751.6" cy="75.8" r="2.300" stroke="#dc28dc" stroke-width="1.100" fill="none"/><circle cx="771.8" cy="66.8" r="2.300" stroke="#dc28dc" stroke-width="1.100" fill="none"/><circle cx="789.4" cy="66.1" r="2.300" stroke="#dc28dc" stroke-width="1.100" fill="none"/><circle cx="804" cy="67.7" r="2.300" stroke="#dc28dc" stroke-width="1.100" fill="none"/><circle cx="814.6" cy="73.6" r="2.300" stroke="#dc28dc" stroke-width="1.100" fill="none"/><rect x="772" y="212.500" width="7" height="7.500" fill="#ff10ff"/></svg>
<div class="t" style="left:839.30px;top:166px;font-size:9.33px;line-height:10px;letter-spacing:-0.69px;color:#d418d4;">400</div>
<div class="t" style="left:762.40px;top:180.3px;font-size:9.33px;line-height:10px;letter-spacing:-0.42px;color:#d418d4;">1120</div>
<div class="t" style="left:723.00px;top:119.6px;font-size:9.33px;line-height:10px;letter-spacing:-0.66px;color:#d418d4;">1840</div>
<div class="t" style="left:752.30px;top:80.6px;font-size:9.33px;line-height:10px;letter-spacing:-0.66px;color:#d418d4;">2560</div>
<div class="t" style="left:791.00px;top:71px;font-size:9.33px;line-height:10px;letter-spacing:-0.66px;color:#d418d4;">3280</div>
<div class="t" style="left:816.40px;top:61.5px;font-size:9.33px;line-height:10px;letter-spacing:-0.66px;color:#d418d4;">4000</div>
<div class="t" style="left:712.85px;top:199.5px;font-size:9.33px;line-height:10px;letter-spacing:0.07px;font-weight:bold;color:#6f6fe6;">Center 2,20GHz / Span 3,60GHz</div>
<div class="t" style="left:627.00px;top:206px;font-size:13px;line-height:15px;letter-spacing:-0.07px;font-weight:bold;color:#fff;">S22</div>
<div class="t" style="left:782.00px;top:211.5px;font-size:9.33px;line-height:10px;color:#e8e8e8;">Z</div>
<svg width="976" height="684"><path d="M309.0 268.6V396.2M334.7 268.6V396.2M360.4 268.6V396.2M386.1 268.6V396.2M411.8 268.6V396.2M437.5 268.6V396.2M463.2 268.6V396.2M488.9 268.6V396.2M514.6 268.6V396.2M540.3 268.6V396.2M566.0 268.6V396.2M306.0 268.6H566.0M306.0 311.1H566.0M306.0 353.7H566.0M306.0 396.2H566.0" stroke="#727272" stroke-width="1" fill="none"/><path d="M309.0 396.2v2.500M314.1 396.2v2.500M319.3 396.2v2.500M324.4 396.2v2.500M329.6 396.2v2.500M334.7 396.2v2.500M339.8 396.2v2.500M345.0 396.2v2.500M350.1 396.2v2.500M355.3 396.2v2.500M360.4 396.2v2.500M365.5 396.2v2.500M370.7 396.2v2.500M375.8 396.2v2.500M381.0 396.2v2.500M386.1 396.2v2.500M391.2 396.2v2.500M396.4 396.2v2.500M401.5 396.2v2.500M406.7 396.2v2.500M411.8 396.2v2.500M416.9 396.2v2.500M422.1 396.2v2.500M427.2 396.2v2.500M432.4 396.2v2.500M437.5 396.2v2.500M442.6 396.2v2.500M447.8 396.2v2.500M452.9 396.2v2.500M458.1 396.2v2.500M463.2 396.2v2.500M468.3 396.2v2.500M473.5 396.2v2.500M478.6 396.2v2.500M483.8 396.2v2.500M488.9 396.2v2.500M494.0 396.2v2.500M499.2 396.2v2.500M504.3 396.2v2.500M509.5 396.2v2.500M514.6 396.2v2.500M519.7 396.2v2.500M524.9 396.2v2.500M530.0 396.2v2.500M535.2 396.2v2.500M540.3 396.2v2.500M545.4 396.2v2.500M550.6 396.2v2.500M555.7 396.2v2.500M560.9 396.2v2.500M306.0 289.9h3M306.0 332.4h3M306.0 374.9h3" stroke="#8c8c8c" stroke-width="1" fill="none"/><path d="M309.3 334.5C310.1 333.4 312.1 330.4 314.0 328.0C315.9 325.6 318.3 323.1 320.6 320.3C322.9 317.6 325.5 314.4 328.0 311.5C330.5 308.6 333.0 305.9 335.8 303.2C338.6 300.4 341.8 297.6 345.0 295.0C348.2 292.4 351.6 289.6 354.8 287.3C358.0 285.1 360.9 283.3 364.0 281.5C367.1 279.7 370.9 278.0 373.7 276.7C376.5 275.4 378.5 274.6 381.0 273.8C383.5 273.0 386.2 272.4 388.9 271.8C391.6 271.2 394.2 270.8 397.0 270.5C399.8 270.2 403.1 270.0 405.9 270.0C408.7 270.0 411.1 270.2 414.0 270.5C416.9 270.8 420.3 271.3 423.0 271.9C425.7 272.5 427.5 273.1 430.0 274.0C432.5 274.9 435.4 276.3 438.2 277.5C441.0 278.7 443.9 279.8 447.0 281.0C450.1 282.2 453.9 283.8 457.1 285.0C460.3 286.2 462.9 287.2 466.0 288.3C469.1 289.4 472.8 290.8 476.0 291.9C479.2 293.0 481.8 293.9 485.0 295.0C488.2 296.1 491.5 297.5 495.0 298.7C498.5 299.9 502.2 301.1 506.0 302.3C509.8 303.5 514.5 304.9 517.8 305.9C521.1 306.8 523.5 307.3 526.0 308.0C528.5 308.7 530.5 309.6 533.0 310.2C535.5 310.8 538.5 311.2 541.0 311.8C543.5 312.4 545.3 313.1 548.0 313.8C550.7 314.5 554.1 315.2 557.0 316.0C559.9 316.8 564.1 318.1 565.5 318.5" stroke="#dc28dc" stroke-width="1.150" fill="none"/><rect x="466" y="266" width="99.500" height="38.500" fill="#000"/><rect x="307.500" y="334" width="4" height="4" fill="#ff20ff"/><path d="M306 328.5L312.6 328.5L309.3 334.2Z" fill="#000" stroke="#fff" stroke-width="1.100"/><path d="M402.7 264L409.3 264L406 269.7Z" fill="#000" stroke="#fff" stroke-width="1.100"/><path d="M562.7 312.5L569.3 312.5L566 318.2Z" fill="#000" stroke="#fff" stroke-width="1.100"/><rect x="422" y="421.500" width="8" height="8" fill="#ff10ff"/></svg>
<div class="t" style="left:305.90px;top:318px;font-size:9.33px;line-height:10px;color:#c8d0f0;">1</div>
<div class="t" style="left:562.40px;top:301.5px;font-size:9.33px;line-height:10px;color:#e8e8e0;">3</div>
<div class="t" style="left:467.70px;top:269px;font-size:9.33px;line-height:10px;letter-spacing:-0.14px;color:#d418d4;">1&gt; 0,400GHz: -15,63dB</div>
<div class="t" style="left:467.70px;top:281px;font-size:9.33px;line-height:10px;letter-spacing:-0.14px;color:#d418d4;">2&gt; 1,760GHz: -0,37dB</div>
<div class="t" style="left:467.70px;top:293px;font-size:9.33px;line-height:10px;letter-spacing:-0.1px;color:#d418d4;">3&gt; 4,000GHz: -11,89dB</div>
<div class="t" style="left:298.80px;top:263.3px;font-size:9.33px;line-height:10px;color:#6f6fe6;">0</div>
<div class="t" style="left:290.52px;top:305.8px;font-size:9.33px;line-height:10px;color:#6f6fe6;">-10</div>
<div class="t" style="left:290.52px;top:348.3px;font-size:9.33px;line-height:10px;color:#6f6fe6;">-20</div>
<div class="t" style="left:290.52px;top:390.9px;font-size:9.33px;line-height:10px;color:#6f6fe6;">-30</div>
<div class="t" style="left:291.56px;top:284px;font-size:9.33px;line-height:10px;color:#f4f4f4;">RL</div>
<div class="t" style="left:287.91px;top:327.5px;font-size:9.33px;line-height:10px;color:#f4f4f4;">[dB]</div>
<div class="t" style="left:299.25px;top:399.5px;font-size:9.33px;line-height:10px;letter-spacing:-0.22px;color:#6f6fe6;">0,40</div>
<div class="t" style="left:324.95px;top:399.5px;font-size:9.33px;line-height:10px;letter-spacing:-0.22px;color:#6f6fe6;">0,76</div>
<div class="t" style="left:350.65px;top:399.5px;font-size:9.33px;line-height:10px;letter-spacing:-0.22px;color:#6f6fe6;">1,12</div>
<div class="t" style="left:376.35px;top:399.5px;font-size:9.33px;line-height:10px;letter-spacing:-0.22px;color:#6f6fe6;">1,48</div>
<div class="t" style="left:402.05px;top:399.5px;font-size:9.33px;line-height:10px;letter-spacing:-0.22px;color:#6f6fe6;">1,84</div>
<div class="t" style="left:427.75px;top:399.5px;font-size:9.33px;line-height:10px;letter-spacing:-0.22px;color:#6f6fe6;">2,20</div>
<div class="t" style="left:453.45px;top:399.5px;font-size:9.33px;line-height:10px;letter-spacing:-0.22px;color:#6f6fe6;">2,56</div>
<div class="t" style="left:479.15px;top:399.5px;font-size:9.33px;line-height:10px;letter-spacing:-0.22px;color:#6f6fe6;">2,92</div>
<div class="t" style="left:510.31px;top:399.5px;font-size:9.33px;line-height:10px;letter-spacing:0.14px;color:#f4f4f4;">F [GHz]</div>
<div class="t" style="left:556.25px;top:399.5px;font-size:9.33px;line-height:10px;letter-spacing:-0.22px;color:#6f6fe6;">4,00</div>
<div class="t" style="left:365.55px;top:409px;font-size:9.33px;line-height:10px;letter-spacing:0.07px;font-weight:bold;color:#6f6fe6;">Center 2,20GHz / Span 3,60GHz</div>
<div class="t" style="left:280.00px;top:414.5px;font-size:13px;line-height:15px;letter-spacing:0.29px;font-weight:bold;color:#fff;">S11</div>
<div class="t" style="left:432.50px;top:421px;font-size:9.33px;line-height:10px;color:#e8e8e8;">RL</div>
<svg width="976" height="684"><path d="M656.2 268.6V396.2M681.9 268.6V396.2M707.7 268.6V396.2M733.4 268.6V396.2M759.1 268.6V396.2M784.9 268.6V396.2M810.6 268.6V396.2M836.3 268.6V396.2M862.0 268.6V396.2M887.8 268.6V396.2M913.5 268.6V396.2M653.2 268.6H913.5M653.2 281.4H913.5M653.2 294.1H913.5M653.2 306.9H913.5M653.2 319.6H913.5M653.2 332.4H913.5M653.2 345.2H913.5M653.2 357.9H913.5M653.2 370.7H913.5M653.2 383.4H913.5M653.2 396.2H913.5" stroke="#727272" stroke-width="1" fill="none"/><path d="M656.2 396.2v2.500M661.3 396.2v2.500M666.5 396.2v2.500M671.6 396.2v2.500M676.8 396.2v2.500M681.9 396.2v2.500M687.1 396.2v2.500M692.2 396.2v2.500M697.4 396.2v2.500M702.5 396.2v2.500M707.7 396.2v2.500M712.8 396.2v2.500M718.0 396.2v2.500M723.1 396.2v2.500M728.2 396.2v2.500M733.4 396.2v2.500M738.5 396.2v2.500M743.7 396.2v2.500M748.8 396.2v2.500M754.0 396.2v2.500M759.1 396.2v2.500M764.3 396.2v2.500M769.4 396.2v2.500M774.6 396.2v2.500M779.7 396.2v2.500M784.9 396.2v2.500M790.0 396.2v2.500M795.1 396.2v2.500M800.3 396.2v2.500M805.4 396.2v2.500M810.6 396.2v2.500M815.7 396.2v2.500M820.9 396.2v2.500M826.0 396.2v2.500M831.2 396.2v2.500M836.3 396.2v2.500M841.5 396.2v2.500M846.6 396.2v2.500M851.7 396.2v2.500M856.9 396.2v2.500M862.0 396.2v2.500M867.2 396.2v2.500M872.3 396.2v2.500M877.5 396.2v2.500M882.6 396.2v2.500M887.8 396.2v2.500M892.9 396.2v2.500M898.1 396.2v2.500M903.2 396.2v2.500M908.4 396.2v2.500M653.2 275.0h3M653.2 287.7h3M653.2 300.5h3M653.2 313.3h3M653.2 326.0h3M653.2 338.8h3M653.2 351.5h3M653.2 364.3h3M653.2 377.1h3M653.2 389.8h3" stroke="#8c8c8c" stroke-width="1" fill="none"/><path d="M913.5 268.6h3M913.5 284.6h3M913.5 300.5h3M913.5 316.4h3M913.5 332.4h3M913.5 348.4h3M913.5 364.3h3M913.5 380.2h3M913.5 396.2h3" stroke="#8c8c8c" stroke-width="1"/><path d="M656.5 300.8C656.9 302.2 658.0 306.4 659.0 309.5C660.0 312.6 661.2 316.1 662.5 319.4C663.8 322.7 665.4 326.4 667.0 329.5C668.6 332.6 670.1 335.2 671.9 338.1C673.7 341.0 675.8 344.2 678.0 347.0C680.2 349.8 682.3 352.2 685.0 355.0C687.7 357.8 690.9 360.9 694.0 363.5C697.1 366.1 700.5 368.5 703.7 370.7C706.9 372.9 709.9 374.9 713.0 376.8C716.1 378.7 719.3 380.3 722.5 382.0C725.7 383.7 728.9 385.4 732.0 387.0C735.1 388.6 738.7 390.2 741.2 391.4C743.7 392.6 745.2 393.3 747.0 394.0C748.8 394.7 750.2 395.6 751.7 395.6C753.2 395.7 754.6 394.8 756.0 394.3C757.4 393.9 756.3 394.2 760.0 392.9C763.7 391.6 771.8 388.8 778.0 386.5C784.2 384.2 791.2 381.7 797.5 379.4C803.8 377.1 809.8 375.1 816.0 372.9C822.2 370.7 828.7 368.3 835.0 366.2C841.3 364.1 847.8 362.0 854.0 360.0C860.2 358.0 866.2 356.1 872.5 354.2C878.8 352.3 885.3 350.4 892.0 348.5C898.7 346.6 909.1 343.6 912.5 342.6" stroke="#dc28dc" stroke-width="1.150" fill="none"/><path d="M656.5 364.4C663.8 364.4 689.1 364.4 700.0 364.4C710.9 364.4 716.2 364.4 722.0 364.2C727.8 364.0 731.8 363.7 735.0 363.4C738.2 363.1 739.2 363.0 741.0 362.5C742.8 362.0 744.7 361.2 746.0 360.5C747.3 359.8 748.0 359.2 748.7 358.2C749.5 357.2 750.0 355.9 750.5 354.5C751.0 353.1 751.3 352.2 751.7 350.0C752.1 347.8 752.4 344.2 752.7 341.0C753.0 337.8 753.3 334.2 753.6 331.0C753.9 327.8 754.2 324.7 754.5 322.0C754.8 319.3 755.2 316.8 755.5 315.0C755.8 313.2 756.1 312.2 756.5 311.0C756.9 309.8 757.3 308.9 758.0 308.0C758.7 307.1 759.5 306.4 760.5 305.8C761.5 305.2 762.3 304.8 763.7 304.4C765.1 304.0 767.1 303.5 769.0 303.2C770.9 302.9 772.2 302.7 775.0 302.5C777.8 302.3 782.2 302.0 786.0 301.8C789.8 301.6 793.5 301.5 797.5 301.3C801.5 301.1 801.2 301.0 810.0 300.9C818.8 300.8 832.8 300.8 850.0 300.7C867.2 300.6 902.5 300.6 913.0 300.6" stroke="#30e030" stroke-width="1.150" fill="none"/><rect x="801.500" y="264" width="115" height="42.500" fill="#000"/><path d="M909 300.600H914" stroke="#30e030" stroke-width="1.300"/><rect x="911" y="298" width="5" height="5" fill="#30e030"/><rect x="654.500" y="300" width="4.500" height="4.500" fill="#ff20ff"/><path d="M653.2 294.6L659.8 294.6L656.5 300.3Z" fill="#000" stroke="#fff" stroke-width="1.100"/><path d="M748.4 389.6L755 389.6L751.7 395.3Z" fill="#000" stroke="#fff" stroke-width="1.100"/><path d="M909.9 337.8L916.5 337.8L913.2 343.5Z" fill="#000" stroke="#fff" stroke-width="1.100"/><rect x="744.200" y="421.500" width="8" height="8" fill="#ff10ff"/><rect x="779.500" y="421.500" width="8" height="8" fill="#20e820"/></svg>
<div class="t" style="left:653.70px;top:283.5px;font-size:9.33px;line-height:10px;color:#8898e8;">1</div>
<div class="t" style="left:749.20px;top:379.5px;font-size:9.33px;line-height:10px;color:#e8e8e0;">2</div>
<div class="t" style="left:908.40px;top:326.5px;font-size:9.33px;line-height:10px;color:#e8e8e0;">3</div>
<div class="t" style="left:803.70px;top:269.5px;font-size:9.33px;line-height:10px;letter-spacing:-0.08px;color:#d418d4;">1&gt; 0,400GHz: 149,60Ohm</div>
<div class="t" style="left:803.70px;top:281.5px;font-size:9.33px;line-height:10px;letter-spacing:-0.09px;color:#d418d4;">2&gt; 1,760GHz: 1,12Ohm</div>
<div class="t" style="left:803.70px;top:293.5px;font-size:9.33px;line-height:10px;letter-spacing:-0.07px;color:#d418d4;">3&gt; 4,000GHz: 83,15Ohm</div>
<div class="t" style="left:635.42px;top:263.3px;font-size:9.33px;line-height:10px;color:#6f6fe6;">200</div>
<div class="t" style="left:635.42px;top:288.82px;font-size:9.33px;line-height:10px;color:#6f6fe6;">160</div>
<div class="t" style="left:635.42px;top:314.34px;font-size:9.33px;line-height:10px;color:#6f6fe6;">120</div>
<div class="t" style="left:640.61px;top:339.86px;font-size:9.33px;line-height:10px;color:#6f6fe6;">80</div>
<div class="t" style="left:640.61px;top:365.38px;font-size:9.33px;line-height:10px;color:#6f6fe6;">40</div>
<div class="t" style="left:645.80px;top:390.9px;font-size:9.33px;line-height:10px;color:#6f6fe6;">0</div>
<div class="t" style="left:638.95px;top:276.5px;font-size:9.33px;line-height:10px;color:#f4f4f4;">|Z|</div>
<div class="t" style="left:625.59px;top:301.5px;font-size:9.33px;line-height:10px;color:#f4f4f4;">[Ohm]</div>
<div class="t" style="left:918.70px;top:263.6px;font-size:9.33px;line-height:10px;color:#6f6fe6;">180</div>
<div class="t" style="left:918.70px;top:295px;font-size:9.33px;line-height:10px;color:#6f6fe6;">90</div>
<div class="t" style="left:918.70px;top:326.9px;font-size:9.33px;line-height:10px;color:#6f6fe6;">0</div>
<div class="t" style="left:918.70px;top:358.8px;font-size:9.33px;line-height:10px;color:#6f6fe6;">-90</div>
<div class="t" style="left:918.70px;top:390.7px;font-size:9.33px;line-height:10px;color:#6f6fe6;">-180</div>
<div class="t" style="left:918.70px;top:278.7px;font-size:9.33px;line-height:10px;letter-spacing:-0.11px;color:#f4f4f4;">Phase</div>
<div class="t" style="left:918.70px;top:311px;font-size:9.33px;line-height:10px;letter-spacing:0.18px;color:#f4f4f4;">[Deg]</div>
<div class="t" style="left:646.45px;top:399.5px;font-size:9.33px;line-height:10px;letter-spacing:-0.22px;color:#6f6fe6;">0,40</div>
<div class="t" style="left:672.15px;top:399.5px;font-size:9.33px;line-height:10px;letter-spacing:-0.22px;color:#6f6fe6;">0,76</div>
<div class="t" style="left:697.85px;top:399.5px;font-size:9.33px;line-height:10px;letter-spacing:-0.22px;color:#6f6fe6;">1,12</div>
<div class="t" style="left:723.55px;top:399.5px;font-size:9.33px;line-height:10px;letter-spacing:-0.22px;color:#6f6fe6;">1,48</div>
<div class="t" style="left:749.25px;top:399.5px;font-size:9.33px;line-height:10px;letter-spacing:-0.22px;color:#6f6fe6;">1,84</div>
<div class="t" style="left:774.95px;top:399.5px;font-size:9.33px;line-height:10px;letter-spacing:-0.22px;color:#6f6fe6;">2,20</div>
<div class="t" style="left:800.65px;top:399.5px;font-size:9.33px;line-height:10px;letter-spacing:-0.22px;color:#6f6fe6;">2,56</div>
<div class="t" style="left:826.35px;top:399.5px;font-size:9.33px;line-height:10px;letter-spacing:-0.22px;color:#6f6fe6;">2,92</div>
<div class="t" style="left:857.51px;top:399.5px;font-size:9.33px;line-height:10px;letter-spacing:0.14px;color:#f4f4f4;">F [GHz]</div>
<div class="t" style="left:903.45px;top:399.5px;font-size:9.33px;line-height:10px;letter-spacing:-0.22px;color:#6f6fe6;">4,00</div>
<div class="t" style="left:712.85px;top:409px;font-size:9.33px;line-height:10px;letter-spacing:0.07px;font-weight:bold;color:#6f6fe6;">Center 2,20GHz / Span 3,60GHz</div>
<div class="t" style="left:627.00px;top:414.5px;font-size:13px;line-height:15px;letter-spacing:-0.07px;font-weight:bold;color:#fff;">S22</div>
<div class="t" style="left:754.50px;top:421px;font-size:9.33px;line-height:10px;color:#e8e8e8;">|Z|</div>
<div class="t" style="left:789.50px;top:421px;font-size:9.33px;line-height:10px;letter-spacing:-0.24px;color:#e8e8e8;">Phase</div>
</body></html>
